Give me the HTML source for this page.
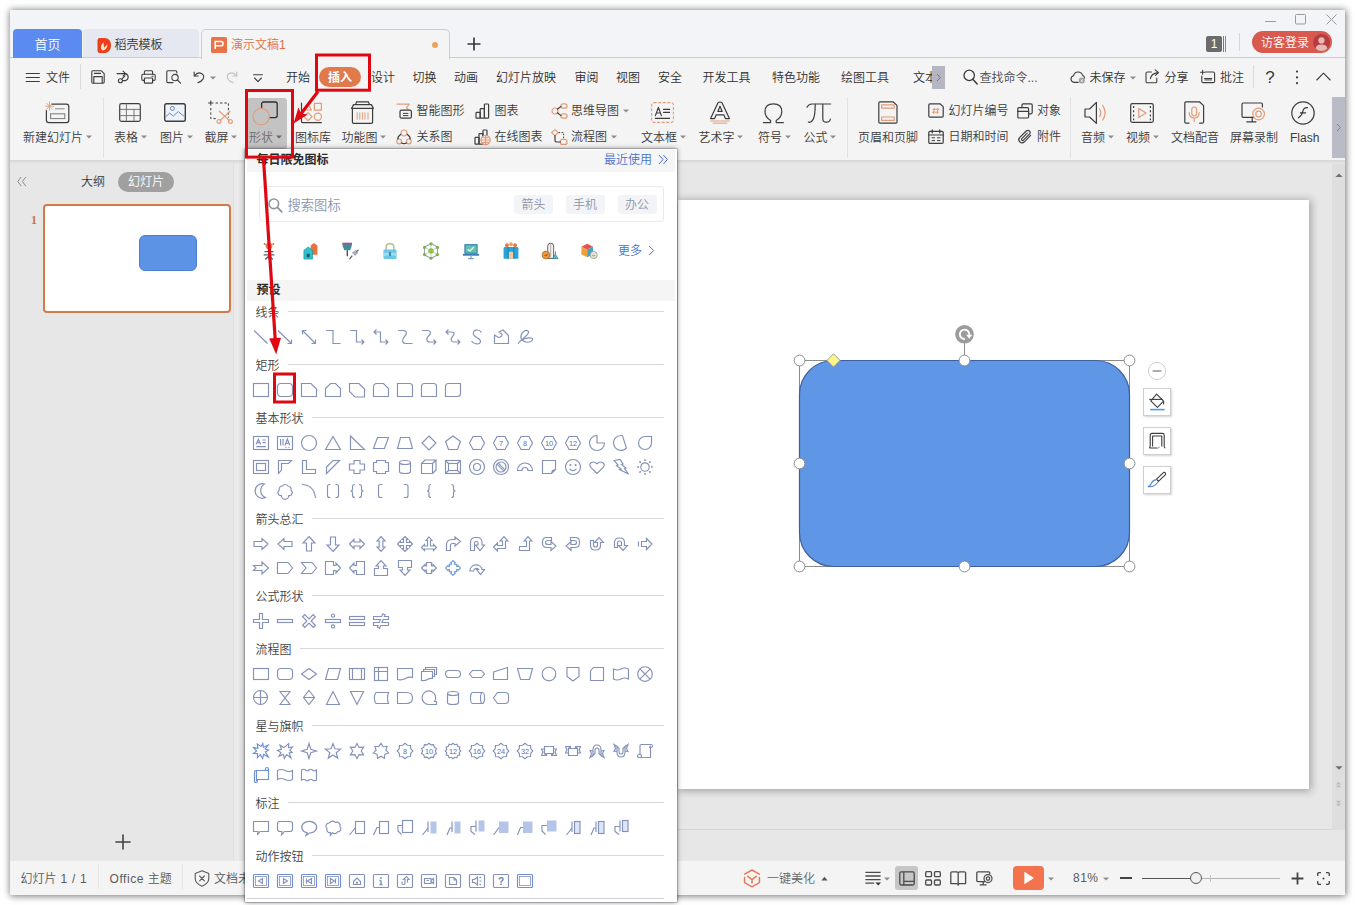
<!DOCTYPE html>
<html lang="zh-CN"><head><meta charset="utf-8"><title>演示文稿1 - WPS 演示</title>
<style>
html,body{margin:0;padding:0;}
body{width:1355px;height:905px;position:relative;overflow:hidden;background:#fff;font-family:"Liberation Sans","Noto Sans CJK SC",sans-serif;font-size:12px;color:#3b3b3b;font-weight:350;}
.a{position:absolute;display:block;}
.t{position:absolute;white-space:nowrap;display:block;}
svg{overflow:visible;}
</style></head>
<body>
<div class="a" style="left:10px;top:10px;width:1335px;height:885px;background:#e7e7e7;box-shadow:0.5px 0.5px 7px 0.5px rgba(0,0,0,.55);"></div>
<div class="a" style="left:10px;top:10px;width:1335px;height:48px;background:#f3f4f8;"></div>
<div class="a" style="left:10px;top:57px;width:1335px;height:1px;background:#c9cdd6;"></div>
<div class="a" style="left:10px;top:58px;width:1335px;height:102px;background:#f4f4f4;"></div>
<div class="a" style="left:10px;top:160px;width:1335px;height:4px;background:linear-gradient(#d6d6d6,#e7e7e7);"></div>
<div class="a" style="left:13px;top:29px;width:69px;height:29px;background:#5b8bf0;border-radius:4px 4px 0 0;"></div>
<span class="t" style="left:13px;top:34.5px;font-size:13px;line-height:19px;color:#fff;width:69px;text-align:center;">首页</span>
<div class="a" style="left:83px;top:29px;width:116px;height:28px;background:#e5e8f0;border-radius:4px 4px 0 0;"></div>
<svg class="a" style="left:96px;top:37px;" width="16" height="17" viewBox="0 0 16 17"><path d="M1.5 3.2Q1.5 1 3.8 1H8.2C12.6 1 15 4.2 15 8.4S12.3 16 8 16H3.8Q1.5 16 1.5 13.8Z" fill="#ea3f1a"/><path d="M6.6 13.6C4 11.6 4.6 8 7.6 5.2C7.2 7.4 8.2 8.4 8 10.4C9.4 9.6 10.4 8.4 11.2 7.2C11.8 10.2 10 12.8 6.6 13.6Z" fill="#ffe3c8"/></svg>
<span class="t" style="left:114.5px;top:36.0px;font-size:12px;line-height:18px;color:#333;">稻壳模板</span>
<div class="a" style="left:201px;top:29px;width:249px;height:30px;background:#f4f4f4;border:1px solid #c9cdd6;border-bottom:none;border-radius:5px 5px 0 0;box-sizing:border-box;"></div>
<svg class="a" style="left:211px;top:37px;" width="16" height="16" viewBox="0 0 16 16"><rect width="16" height="16" rx="1.5" fill="#ea7349"/><path d="M4.2 12V4.6H10.2Q12 4.6 12 6.4V7Q12 8.8 10.2 8.8H4.2" fill="none" stroke="#fff" stroke-width="1.5"/></svg>
<span class="t" style="left:231px;top:36.0px;font-size:12px;line-height:18px;color:#e0703f;">演示文稿1</span>
<div class="a" style="left:432px;top:42px;width:6px;height:6px;background:#e9a45c;border-radius:50%;"></div>
<svg class="a" style="left:467px;top:37px;" width="14" height="14" viewBox="0 0 14 14"><path d="M7 0.5V13.5M0.5 7H13.5" stroke="#3a3a3a" stroke-width="1.7" fill="none"/></svg>
<svg class="a" style="left:1264px;top:13px;" width="74" height="14" viewBox="0 0 74 14"><path d="M1 8.5H12" stroke="#9a9a9a" stroke-width="1"/><rect x="31.5" y="1.5" width="10" height="9.5" rx="1" fill="none" stroke="#9a9a9a" stroke-width="1"/><path d="M62.5 1.5L72.5 11.5M72.5 1.5L62.5 11.5" stroke="#9a9a9a" stroke-width="1"/></svg>
<div class="a" style="left:1206px;top:36px;width:16px;height:16px;background:#6b6b6b;border-radius:2px;"></div>
<span class="t" style="left:1206px;top:35.0px;font-size:12px;line-height:18px;color:#fff;width:16px;text-align:center;">1</span>
<div class="a" style="left:1223px;top:36px;width:1px;height:16px;background:#7a7a7a;"></div>
<div class="a" style="left:1225px;top:36px;width:1px;height:16px;background:#8a8a8a;"></div>
<div class="a" style="left:1239px;top:33px;width:1px;height:18px;background:#d4d6dc;"></div>
<div class="a" style="left:1252px;top:31px;width:80px;height:22px;background:#d9594f;border-radius:11px;"></div>
<span class="t" style="left:1261px;top:33.5px;font-size:12px;line-height:18px;color:#fff;">访客登录</span>
<svg class="a" style="left:1313px;top:33.5px;" width="17" height="17" viewBox="0 0 17 17"><circle cx="8.5" cy="8.5" r="8.5" fill="#b63c43"/><circle cx="8.5" cy="6.4" r="3.1" fill="#e6b9b4"/><path d="M2.6 14.4Q3.2 10.4 8.5 10.4T14.4 14.4Q11.8 17 8.5 17T2.6 14.4Z" fill="#e6b9b4"/></svg>
<svg class="a" style="left:25px;top:72px;" width="15" height="12" viewBox="0 0 15 12"><path d="M0.8 1.5H14.8M0.8 5.5H14.8M0.8 9.5H14.8" stroke="#3d3d3d" stroke-width="1.1"/></svg>
<span class="t" style="left:46px;top:69.3px;font-size:12px;line-height:18px;color:#333;">文件</span>
<div class="a" style="left:80px;top:64px;width:1px;height:25px;background:#d9d9d9;"></div>
<svg class="a" style="left:91px;top:70px;" width="14" height="14" viewBox="0 0 14 14"><path d="M1.6 0.8H10.4L13.2 3.6V12Q13.2 13.2 12 13.2H1.8Q0.8 13.2 0.8 12V1.8Q0.8 0.8 1.6 0.8Z" fill="none" stroke="#3d3d3d" stroke-width="1.1" stroke-linejoin="round" stroke-linecap="round"/><path d="M2.8 13V6.6H11.2V13M3.4 3.4H9.6" fill="none" stroke="#3d3d3d" stroke-width="1.1" stroke-linejoin="round" stroke-linecap="round"/></svg>
<svg class="a" style="left:116px;top:70px;" width="15" height="14" viewBox="0 0 15 14"><path d="M1 3.6H9.4A3.6 3.6 0 0 1 9.4 10.6H6.6" fill="none" stroke="#3d3d3d" stroke-width="1.1" stroke-linejoin="round" stroke-linecap="round"/><path d="M7 1.2L9.6 3.6L7 6" fill="none" stroke="#3d3d3d" stroke-width="1.1" stroke-linejoin="round" stroke-linecap="round"/><circle cx="4.4" cy="10.8" r="2" fill="none" stroke="#3d3d3d" stroke-width="1.1" stroke-linejoin="round" stroke-linecap="round"/><path d="M5.8 9.2L9 5.8" fill="none" stroke="#3d3d3d" stroke-width="1.1" stroke-linejoin="round" stroke-linecap="round"/></svg>
<svg class="a" style="left:141px;top:70px;" width="15" height="14" viewBox="0 0 15 14"><path d="M3.4 4.2V1.8Q3.4 0.8 4.4 0.8H10.6Q11.6 0.8 11.6 1.8V4.2" fill="none" stroke="#3d3d3d" stroke-width="1.1" stroke-linejoin="round" stroke-linecap="round"/><rect x="0.8" y="4.2" width="13.4" height="6.2" rx="1.2" fill="none" stroke="#3d3d3d" stroke-width="1.1" stroke-linejoin="round" stroke-linecap="round"/><rect x="3.4" y="8" width="8.2" height="5.2" rx="0.8" fill="#f4f4f4" stroke="#3d3d3d" stroke-width="1.2"/><path d="M11 6.2H12" fill="none" stroke="#3d3d3d" stroke-width="1.1" stroke-linejoin="round" stroke-linecap="round"/></svg>
<svg class="a" style="left:166px;top:70px;" width="16" height="14" viewBox="0 0 16 14"><path d="M7 12.6H1.8Q0.8 12.6 0.8 11.6V1.8Q0.8 0.8 1.8 0.8H9.8Q10.8 0.8 10.8 1.8V3" fill="none" stroke="#3d3d3d" stroke-width="1.1" stroke-linejoin="round" stroke-linecap="round"/><circle cx="9" cy="7.6" r="3.2" fill="none" stroke="#3d3d3d" stroke-width="1.1" stroke-linejoin="round" stroke-linecap="round"/><path d="M11.4 10L14.6 13.2" fill="none" stroke="#3d3d3d" stroke-width="1.1" stroke-linejoin="round" stroke-linecap="round"/></svg>
<svg class="a" style="left:193px;top:70px;" width="12" height="14" viewBox="0 0 12 14"><path d="M1.2 2V6H5.2" fill="none" stroke="#3d3d3d" stroke-width="1.1" stroke-linejoin="round" stroke-linecap="round"/><path d="M1.6 5.8Q4.6 1.6 8.4 3.4T9.8 9.4Q8.2 11.8 5 12.6" fill="none" stroke="#3d3d3d" stroke-width="1.1" stroke-linejoin="round" stroke-linecap="round"/></svg>
<svg class="a" style="left:209.5px;top:76px;" width="6" height="4" viewBox="0 0 6 4"><path d="M0 0.4h6L3 3.6z" fill="#8c8c8c"/></svg>
<svg class="a" style="left:226px;top:70px;" width="12" height="14" viewBox="0 0 12 14"><path d="M10.8 2V6H6.8" fill="none" stroke="#c4c4c4" stroke-width="1.2" stroke-linejoin="round" stroke-linecap="round"/><path d="M10.4 5.8Q7.4 1.6 3.6 3.4T2.2 9.4Q3.8 11.8 7 12.6" fill="none" stroke="#c4c4c4" stroke-width="1.2" stroke-linejoin="round" stroke-linecap="round"/></svg>
<svg class="a" style="left:253px;top:74px;" width="10" height="9" viewBox="0 0 10 9"><path d="M0.6 0.8H9.4" fill="none" stroke="#3d3d3d" stroke-width="1.1" stroke-linejoin="round" stroke-linecap="round"/><path d="M1.6 4L5 7.6L8.4 4" fill="none" stroke="#3d3d3d" stroke-width="1.1" stroke-linejoin="round" stroke-linecap="round"/></svg>
<span class="t" style="left:286px;top:69.3px;font-size:12px;line-height:18px;color:#2f2f2f;">开始</span>
<span class="t" style="left:371px;top:69.3px;font-size:12px;line-height:18px;color:#2f2f2f;">设计</span>
<span class="t" style="left:412.5px;top:69.3px;font-size:12px;line-height:18px;color:#2f2f2f;">切换</span>
<span class="t" style="left:454px;top:69.3px;font-size:12px;line-height:18px;color:#2f2f2f;">动画</span>
<span class="t" style="left:496px;top:69.3px;font-size:12px;line-height:18px;color:#2f2f2f;">幻灯片放映</span>
<span class="t" style="left:574.5px;top:69.3px;font-size:12px;line-height:18px;color:#2f2f2f;">审阅</span>
<span class="t" style="left:616px;top:69.3px;font-size:12px;line-height:18px;color:#2f2f2f;">视图</span>
<span class="t" style="left:658px;top:69.3px;font-size:12px;line-height:18px;color:#2f2f2f;">安全</span>
<span class="t" style="left:702.5px;top:69.3px;font-size:12px;line-height:18px;color:#2f2f2f;">开发工具</span>
<span class="t" style="left:772px;top:69.3px;font-size:12px;line-height:18px;color:#2f2f2f;">特色功能</span>
<span class="t" style="left:841px;top:69.3px;font-size:12px;line-height:18px;color:#2f2f2f;">绘图工具</span>
<div class="a" style="left:319px;top:67px;width:42px;height:20px;background:#e07a4b;border-radius:10px;"></div>
<span class="t" style="left:319px;top:69.3px;font-size:12px;line-height:18px;color:#fff;font-weight:700;width:42px;text-align:center;">插入</span>
<span class="t" style="left:913px;top:69.3px;font-size:12px;line-height:18px;color:#2f2f2f;width:20px;overflow:hidden;">文本</span>
<div class="a" style="left:932px;top:66px;width:13px;height:23px;background:#b4b7c1;"></div>
<svg class="a" style="left:935px;top:73px;" width="7" height="9" viewBox="0 0 7 9"><path d="M2 1L5.4 4.5L2 8" fill="none" stroke="#6c7080" stroke-width="1"/></svg>
<svg class="a" style="left:963px;top:69px;" width="15" height="16" viewBox="0 0 15 16"><circle cx="6.2" cy="6.4" r="5.2" fill="none" stroke="#3d3d3d" stroke-width="1.3"/><path d="M10 10.4L14.2 15" stroke="#3d3d3d" stroke-width="1.5" stroke-linecap="round"/></svg>
<span class="t" style="left:979.5px;top:69.3px;font-size:12px;line-height:18px;color:#4a4a4a;">查找命令...</span>
<svg class="a" style="left:1070px;top:70px;" width="16" height="14" viewBox="0 0 16 14"><path d="M8.2 12.4H4.2A3.4 3.4 0 0 1 3.6 5.7A4.6 4.6 0 0 1 12.5 5.2A3.3 3.3 0 0 1 14.6 8" fill="none" stroke="#3d3d3d" stroke-width="1.1" stroke-linejoin="round" stroke-linecap="round"/><circle cx="11.8" cy="10.6" r="3" fill="#9c9c9c"/><path d="M10.7 9.5L12.9 11.7M12.9 9.5L10.7 11.7" stroke="#fff" stroke-width="0.9"/></svg>
<span class="t" style="left:1089.5px;top:69.3px;font-size:12px;line-height:18px;color:#333;">未保存</span>
<svg class="a" style="left:1130px;top:76px;" width="6" height="4" viewBox="0 0 6 4"><path d="M0 0.4h6L3 3.6z" fill="#8c8c8c"/></svg>
<svg class="a" style="left:1145px;top:69px;" width="15" height="15" viewBox="0 0 15 15"><path d="M6.4 3H2.4Q1 3 1 4.4V12.4Q1 13.8 2.4 13.8H10.4Q11.8 13.8 11.8 12.4V9" fill="none" stroke="#3d3d3d" stroke-width="1.1" stroke-linejoin="round" stroke-linecap="round"/><path d="M5.4 9.6Q6.2 4.4 13 3.6" fill="none" stroke="#3d3d3d" stroke-width="1.1" stroke-linejoin="round" stroke-linecap="round"/><path d="M10.2 0.9L13.4 3.5L10.6 6.4" fill="none" stroke="#3d3d3d" stroke-width="1.1" stroke-linejoin="round" stroke-linecap="round"/></svg>
<span class="t" style="left:1164.5px;top:69.3px;font-size:12px;line-height:18px;color:#333;">分享</span>
<svg class="a" style="left:1200px;top:69px;" width="16" height="15" viewBox="0 0 16 15"><path d="M5.4 3H13.2Q14.6 3 14.6 4.4V12.2Q14.6 13.6 13.2 13.6H3.2Q1.8 13.6 1.8 12.2V7" fill="none" stroke="#3d3d3d" stroke-width="1.1" stroke-linejoin="round" stroke-linecap="round"/><path d="M0.6 3.2H4.6M2.6 1.2V5.2" fill="none" stroke="#3d3d3d" stroke-width="1.1" stroke-linejoin="round" stroke-linecap="round"/><path d="M4.6 9.6H11.8" fill="none" stroke="#3d3d3d" stroke-width="1.1" stroke-linejoin="round" stroke-linecap="round"/><path d="M4.6 11H11.8" stroke="#3d3d3d" stroke-width="0.8"/></svg>
<span class="t" style="left:1220px;top:69.3px;font-size:12px;line-height:18px;color:#333;">批注</span>
<div class="a" style="left:1253px;top:65px;width:1px;height:23px;background:#d9d9d9;"></div>
<span class="t" style="left:1261px;top:67.8px;font-size:17px;line-height:20px;color:#3a3a3a;width:18px;text-align:center;">?</span>
<svg class="a" style="left:1295px;top:70px;" width="4" height="15" viewBox="0 0 4 15"><circle cx="2" cy="1.6" r="1.1" fill="#3d3d3d"/><circle cx="2" cy="7.4" r="1.1" fill="#3d3d3d"/><circle cx="2" cy="13.2" r="1.1" fill="#3d3d3d"/></svg>
<svg class="a" style="left:1316px;top:72px;" width="15" height="9" viewBox="0 0 15 9"><path d="M0.8 8L7.5 1.2L14.2 8" fill="none" stroke="#3d3d3d" stroke-width="1.1" stroke-linejoin="round" stroke-linecap="round"/></svg>
<div class="a" style="left:103px;top:97px;width:1px;height:61px;background:#e2e2e2;"></div>
<div class="a" style="left:847px;top:97px;width:1px;height:61px;background:#e2e2e2;"></div>
<div class="a" style="left:1070px;top:97px;width:1px;height:61px;background:#e2e2e2;"></div>
<svg class="a" style="left:45px;top:101px;" width="25" height="23" viewBox="0 0 25 23"><path d="M6.6 3.2H21.4Q23.8 3.2 23.8 5.6V19.2Q23.8 21.6 21.4 21.6H3.8Q1.4 21.6 1.4 19.2V9.6" fill="none" stroke="#3d3d3d" stroke-width="1.2" stroke-linejoin="round" stroke-linecap="round" stroke-width="1.4"/><path d="M10 7.8H19.6" stroke="#8a8a8a" stroke-width="1"/><rect x="5.6" y="12.8" width="14.2" height="4.8" fill="none" stroke="#7a7a7a" stroke-width="1"/><path d="M4.5 0.6V9.8M-0.1 5.2H9.1M1.3 2L7.7 8.4M7.7 2L1.3 8.4" stroke="#e29c78" stroke-width="0.9" fill="none"/></svg>
<span class="t" style="left:23px;top:128.9px;font-size:12px;line-height:18px;color:#3b3b3b;">新建幻灯片</span>
<svg class="a" style="left:85.8px;top:134.5px;" width="6" height="4" viewBox="0 0 6 4"><path d="M0 0.4h6L3 3.6z" fill="#8c8c8c"/></svg>
<svg class="a" style="left:119px;top:103px;" width="22" height="19" viewBox="0 0 22 19"><rect x="0.7" y="0.7" width="20.6" height="17.6" rx="1.8" fill="none" stroke="#3d3d3d" stroke-width="1.2" stroke-linejoin="round" stroke-linecap="round" stroke-width="1.4"/><path d="M0.6 6.4H21.4M0.6 12.6H21.4M7.4 0.6V18.4M15 6.4V18.4" stroke="#6a6a6a" stroke-width="0.9" fill="none"/></svg>
<span class="t" style="left:114px;top:128.9px;font-size:12px;line-height:18px;color:#3b3b3b;">表格</span>
<svg class="a" style="left:140.8px;top:134.5px;" width="6" height="4" viewBox="0 0 6 4"><path d="M0 0.4h6L3 3.6z" fill="#8c8c8c"/></svg>
<svg class="a" style="left:164px;top:103px;" width="22" height="19" viewBox="0 0 22 19"><rect x="0.7" y="0.7" width="20.6" height="17.6" rx="1.8" fill="#eef3fb" stroke="#3d3d3d" stroke-width="1.4"/><circle cx="8.4" cy="5.4" r="2" fill="none" stroke="#6a86b8" stroke-width="1"/><path d="M1.4 14L5.6 10.2L9.4 13L14.2 8.6L20.4 13.6" fill="none" stroke="#6a86b8" stroke-width="1" stroke-linejoin="round"/></svg>
<span class="t" style="left:160px;top:128.9px;font-size:12px;line-height:18px;color:#3b3b3b;">图片</span>
<svg class="a" style="left:186.8px;top:134.5px;" width="6" height="4" viewBox="0 0 6 4"><path d="M0 0.4h6L3 3.6z" fill="#8c8c8c"/></svg>
<svg class="a" style="left:208px;top:100px;" width="25" height="24" viewBox="0 0 25 24"><path d="M2.8 0.4V5.6M0.2 3H5.4" stroke="#3d3d3d" stroke-width="1.1"/><path d="M7.6 3H20.4V17.6M2.8 8V18.6H8.6" fill="none" stroke="#3d3d3d" stroke-width="1" stroke-dasharray="2.4 2"/><path d="M11.4 11.2L21.4 20.6M22 11.2L12 20.6" fill="none" stroke="#e29c78" stroke-width="1.2" stroke-linejoin="round" stroke-linecap="round"/><circle cx="11" cy="21.4" r="1.9" fill="none" stroke="#e29c78" stroke-width="1.2" stroke-linejoin="round" stroke-linecap="round"/><circle cx="22.4" cy="21.4" r="1.9" fill="none" stroke="#e29c78" stroke-width="1.2" stroke-linejoin="round" stroke-linecap="round"/></svg>
<span class="t" style="left:204.5px;top:128.9px;font-size:12px;line-height:18px;color:#3b3b3b;">截屏</span>
<svg class="a" style="left:231.3px;top:134.5px;" width="6" height="4" viewBox="0 0 6 4"><path d="M0 0.4h6L3 3.6z" fill="#8c8c8c"/></svg>
<div class="a" style="left:247px;top:98px;width:40px;height:51px;background:#c3c3c3;border-radius:3px;"></div>
<svg class="a" style="left:252px;top:101px;" width="27" height="25" viewBox="0 0 27 25"><rect x="9.6" y="1" width="15.6" height="15.6" rx="2" fill="none" stroke="#2f2f2f" stroke-width="1.3"/><circle cx="9.2" cy="15.6" r="8.2" fill="#c3c3c3" stroke="#e29c78" stroke-width="1.2"/></svg>
<span class="t" style="left:249px;top:128.9px;font-size:12px;line-height:18px;color:#6e6e6e;">形状</span>
<svg class="a" style="left:275.8px;top:134.5px;" width="6" height="4" viewBox="0 0 6 4"><path d="M0 0.4h6L3 3.6z" fill="#666"/></svg>
<svg class="a" style="left:300px;top:101px;" width="24" height="23" viewBox="0 0 24 23"><path d="M1.5 2V20.4Q1.5 21.7 2.8 21.7H21.4" fill="none" stroke="#3d3d3d" stroke-width="1.2" stroke-linejoin="round" stroke-linecap="round" stroke-width="1.3"/><path d="M4.6 9L8 3.2L11.4 9Z" fill="none" stroke="#e29c78" stroke-width="1.2" stroke-linejoin="round" stroke-linecap="round"/><rect x="14.4" y="2.4" width="7" height="6.8" fill="none" stroke="#e29c78" stroke-width="1.2" stroke-linejoin="round" stroke-linecap="round"/><path d="M8 11.6L12 15.6L8 19.6L4 15.6Z" fill="none" stroke="#e29c78" stroke-width="1.2" stroke-linejoin="round" stroke-linecap="round"/><circle cx="17.9" cy="15.7" r="3.6" fill="none" stroke="#e29c78" stroke-width="1.2" stroke-linejoin="round" stroke-linecap="round"/></svg>
<span class="t" style="left:295px;top:128.9px;font-size:12px;line-height:18px;color:#3b3b3b;">图标库</span>
<svg class="a" style="left:351px;top:101px;" width="23" height="23" viewBox="0 0 23 23"><path d="M1.4 7.4H21.6V21Q21.6 22.4 20.2 22.4H2.8Q1.4 22.4 1.4 21Z" fill="none" stroke="#3d3d3d" stroke-width="1.2" stroke-linejoin="round" stroke-linecap="round"/><path d="M0.6 7.4L2.6 3.6H20.4L22.4 7.4" fill="none" stroke="#3d3d3d" stroke-width="1.2" stroke-linejoin="round" stroke-linecap="round"/><path d="M4.6 3.4L5.6 0.8H17.4L18.4 3.4" fill="none" stroke="#3d3d3d" stroke-width="1.2" stroke-linejoin="round" stroke-linecap="round"/><path d="M6.2 11.4V18.6M8.8 11.4V18.6M11.4 11.4V18.6M14 11.4V18.6M17 11.4V18.6" stroke="#e29c78" stroke-width="1"/></svg>
<span class="t" style="left:341.5px;top:128.9px;font-size:12px;line-height:18px;color:#3b3b3b;">功能图</span>
<svg class="a" style="left:380.3px;top:134.5px;" width="6" height="4" viewBox="0 0 6 4"><path d="M0 0.4h6L3 3.6z" fill="#8c8c8c"/></svg>
<svg class="a" style="left:396px;top:102.5px;" width="17" height="16" viewBox="0 0 17 16"><path d="M1 1.2H13.2L10.6 4.6L13.2 8H6.2" fill="none" stroke="#e29c78" stroke-width="1.2" stroke-linejoin="round" stroke-linecap="round"/><rect x="4" y="7.2" width="11.4" height="8" rx="1.5" fill="#f4f4f4" stroke="#3d3d3d" stroke-width="1.2"/><path d="M7 10.4H12.4M7 12.6H12.4" stroke="#3d3d3d" stroke-width="1"/></svg>
<span class="t" style="left:416.5px;top:101.5px;font-size:12px;line-height:18px;color:#3b3b3b;">智能图形</span>
<svg class="a" style="left:396px;top:128.5px;" width="17" height="16" viewBox="0 0 17 16"><circle cx="8" cy="4" r="3" fill="none" stroke="#e29c78" stroke-width="1.2" stroke-linejoin="round" stroke-linecap="round"/><circle cx="3.2" cy="12.4" r="2.4" fill="none" stroke="#e29c78" stroke-width="1.2" stroke-linejoin="round" stroke-linecap="round"/><circle cx="12.8" cy="12.4" r="2.4" fill="none" stroke="#e29c78" stroke-width="1.2" stroke-linejoin="round" stroke-linecap="round"/><path d="M4.6 5.4Q1.6 7.4 1.8 10M11.4 5.4Q14.4 7.4 14.2 10M5.6 14Q8 15.4 10.4 14" fill="none" stroke="#3d3d3d" stroke-width="1.2" stroke-linejoin="round" stroke-linecap="round"/></svg>
<span class="t" style="left:416.5px;top:127.5px;font-size:12px;line-height:18px;color:#3b3b3b;">关系图</span>
<svg class="a" style="left:475px;top:102.5px;" width="17" height="16" viewBox="0 0 17 16"><rect x="1" y="9.4" width="4.2" height="5.8" rx="0.8" fill="none" stroke="#3d3d3d" stroke-width="1.2" stroke-linejoin="round" stroke-linecap="round"/><rect x="5.2" y="5.6" width="4.2" height="9.6" rx="0.8" fill="none" stroke="#3d3d3d" stroke-width="1.2" stroke-linejoin="round" stroke-linecap="round"/><rect x="9.4" y="1" width="4.2" height="14.2" rx="0.8" fill="none" stroke="#3d3d3d" stroke-width="1.2" stroke-linejoin="round" stroke-linecap="round"/></svg>
<span class="t" style="left:494.5px;top:101.5px;font-size:12px;line-height:18px;color:#3b3b3b;">图表</span>
<svg class="a" style="left:474px;top:128.5px;" width="17" height="16" viewBox="0 0 17 16"><rect x="1" y="8.4" width="4" height="6.8" rx="0.8" fill="none" stroke="#3d3d3d" stroke-width="1.2" stroke-linejoin="round" stroke-linecap="round"/><rect x="5" y="4.6" width="4" height="10.6" rx="0.8" fill="none" stroke="#3d3d3d" stroke-width="1.2" stroke-linejoin="round" stroke-linecap="round"/><rect x="9" y="1" width="4" height="8" rx="0.8" fill="none" stroke="#3d3d3d" stroke-width="1.2" stroke-linejoin="round" stroke-linecap="round"/><circle cx="11.6" cy="11" r="4.6" fill="#f4f4f4" stroke="#e29c78" stroke-width="1.2"/><path d="M7 11H16.2M11.6 6.4V15.6M8.6 8.2Q11.6 9.6 14.6 8.2M8.6 13.8Q11.6 12.4 14.6 13.8" fill="none" stroke="#e29c78" stroke-width="1.2" stroke-linejoin="round" stroke-linecap="round" stroke-width="0.9"/></svg>
<span class="t" style="left:494.5px;top:127.5px;font-size:12px;line-height:18px;color:#3b3b3b;">在线图表</span>
<svg class="a" style="left:551px;top:102.5px;" width="17" height="16" viewBox="0 0 17 16"><circle cx="4" cy="8" r="3" fill="none" stroke="#e29c78" stroke-width="1.2" stroke-linejoin="round" stroke-linecap="round"/><rect x="10" y="0.8" width="6" height="4.4" rx="2" fill="none" stroke="#e29c78" stroke-width="1.2" stroke-linejoin="round" stroke-linecap="round"/><rect x="10" y="10.8" width="6" height="4.4" rx="2" fill="none" stroke="#e29c78" stroke-width="1.2" stroke-linejoin="round" stroke-linecap="round"/><path d="M6.4 6.2L10 3.4M6.4 9.8L10 12.6" fill="none" stroke="#3d3d3d" stroke-width="1.2" stroke-linejoin="round" stroke-linecap="round"/></svg>
<span class="t" style="left:571px;top:101.5px;font-size:12px;line-height:18px;color:#3b3b3b;">思维导图</span>
<svg class="a" style="left:622.5px;top:109.0px;" width="6" height="4" viewBox="0 0 6 4"><path d="M0 0.4h6L3 3.6z" fill="#8c8c8c"/></svg>
<svg class="a" style="left:551px;top:128.5px;" width="17" height="16" viewBox="0 0 17 16"><path d="M4 0.6L7.4 3.6L4 6.6L0.6 3.6Z" fill="none" stroke="#e29c78" stroke-width="1.2" stroke-linejoin="round" stroke-linecap="round"/><rect x="9.4" y="10.4" width="6.6" height="5" rx="2" fill="none" stroke="#e29c78" stroke-width="1.2" stroke-linejoin="round" stroke-linecap="round"/><path d="M4 6.6V11.6Q4 13 5.4 13H9.4" fill="none" stroke="#3d3d3d" stroke-width="1.2" stroke-linejoin="round" stroke-linecap="round"/><path d="M7.6 3.6H12.6V10.2" fill="none" stroke="#3d3d3d" stroke-width="1" stroke-dasharray="1.6 1.4"/></svg>
<span class="t" style="left:571px;top:127.5px;font-size:12px;line-height:18px;color:#3b3b3b;">流程图</span>
<svg class="a" style="left:610.5px;top:135.0px;" width="6" height="4" viewBox="0 0 6 4"><path d="M0 0.4h6L3 3.6z" fill="#8c8c8c"/></svg>
<svg class="a" style="left:651px;top:102px;" width="23" height="21" viewBox="0 0 23 21"><rect x="0.6" y="0.6" width="21.8" height="19.8" rx="2" fill="none" stroke="#e29c78" stroke-width="1.1" stroke-dasharray="3 1.6"/><path d="M4.4 13.6L7.4 5.4L10.4 13.6M5.4 11H9.4" fill="none" stroke="#3d3d3d" stroke-width="1.2" stroke-linejoin="round" stroke-linecap="round"/><path d="M12.6 7.4H18.6M12.6 10.4H18.6" fill="none" stroke="#3d3d3d" stroke-width="1.2" stroke-linejoin="round" stroke-linecap="round" stroke-width="1"/><path d="M4.4 16.4H18.6" fill="none" stroke="#3d3d3d" stroke-width="1.2" stroke-linejoin="round" stroke-linecap="round" stroke-width="1"/></svg>
<span class="t" style="left:641px;top:128.9px;font-size:12px;line-height:18px;color:#3b3b3b;">文本框</span>
<svg class="a" style="left:679.8px;top:134.5px;" width="6" height="4" viewBox="0 0 6 4"><path d="M0 0.4h6L3 3.6z" fill="#8c8c8c"/></svg>
<svg class="a" style="left:709px;top:101px;" width="22" height="23" viewBox="0 0 22 23"><path d="M1.6 17.6L9 1.8Q11 0.2 13 1.8L20.4 17.6H16.4L14.8 13.8H7.2L5.6 17.6Z" fill="none" stroke="#3d3d3d" stroke-width="1.2" stroke-linejoin="round" stroke-linecap="round"/><path d="M8.8 10.4L11 5.2L13.2 10.4Z" fill="none" stroke="#3d3d3d" stroke-width="1.2" stroke-linejoin="round" stroke-linecap="round"/><path d="M1.2 20H20.8" stroke="#e29c78" stroke-width="1"/><path d="M3.6 22.2H18.4" stroke="#e29c78" stroke-width="1"/></svg>
<span class="t" style="left:698.5px;top:128.9px;font-size:12px;line-height:18px;color:#3b3b3b;">艺术字</span>
<svg class="a" style="left:737.3px;top:134.5px;" width="6" height="4" viewBox="0 0 6 4"><path d="M0 0.4h6L3 3.6z" fill="#8c8c8c"/></svg>
<svg class="a" style="left:762px;top:102px;" width="23" height="22" viewBox="0 0 23 22"><path d="M1.4 20.6H8.6V18.6Q3 15.4 3 9.6Q3 1.8 11.4 1.8T19.8 9.6Q19.8 15.4 14.2 18.6V20.6H21.4" fill="none" stroke="#3d3d3d" stroke-width="1.2" stroke-linejoin="round" stroke-linecap="round" stroke-width="1.3"/></svg>
<span class="t" style="left:758px;top:128.9px;font-size:12px;line-height:18px;color:#3b3b3b;">符号</span>
<svg class="a" style="left:784.8px;top:134.5px;" width="6" height="4" viewBox="0 0 6 4"><path d="M0 0.4h6L3 3.6z" fill="#8c8c8c"/></svg>
<svg class="a" style="left:806px;top:102px;" width="26" height="22" viewBox="0 0 26 22"><path d="M1 5.2Q2.6 2 6 2H24.6" fill="none" stroke="#3d3d3d" stroke-width="1.2" stroke-linejoin="round" stroke-linecap="round" stroke-width="1.3"/><path d="M9.2 2.4Q9.2 14 7 17.6T2.4 20" fill="none" stroke="#3d3d3d" stroke-width="1.2" stroke-linejoin="round" stroke-linecap="round" stroke-width="1.3"/><path d="M16.8 2.4V16.4Q16.8 20.4 20.4 20.2T24.4 17" fill="none" stroke="#3d3d3d" stroke-width="1.2" stroke-linejoin="round" stroke-linecap="round" stroke-width="1.3"/></svg>
<span class="t" style="left:803.5px;top:128.9px;font-size:12px;line-height:18px;color:#3b3b3b;">公式</span>
<svg class="a" style="left:830.3px;top:134.5px;" width="6" height="4" viewBox="0 0 6 4"><path d="M0 0.4h6L3 3.6z" fill="#8c8c8c"/></svg>
<svg class="a" style="left:878px;top:101px;" width="20" height="23" viewBox="0 0 20 23"><path d="M2 0.8H15L19 4.4V21Q19 22.2 17.8 22.2H2Q0.8 22.2 0.8 21V2Q0.8 0.8 2 0.8Z" fill="none" stroke="#3d3d3d" stroke-width="1.2" stroke-linejoin="round" stroke-linecap="round"/><rect x="3.6" y="3.8" width="12.6" height="3.4" fill="none" stroke="#e29c78" stroke-width="1.2" stroke-linejoin="round" stroke-linecap="round" fill="#f3d2c0"/><rect x="3.6" y="16" width="12.6" height="3.4" fill="none" stroke="#e29c78" stroke-width="1.2" stroke-linejoin="round" stroke-linecap="round" fill="#f3d2c0"/></svg>
<span class="t" style="left:858px;top:128.9px;font-size:12px;line-height:18px;color:#3b3b3b;">页眉和页脚</span>
<svg class="a" style="left:928px;top:102.5px;" width="17" height="16" viewBox="0 0 17 16"><path d="M2 0.8H12L15.2 3.6V13Q15.2 14.2 14 14.2H2Q0.8 14.2 0.8 13V2Q0.8 0.8 2 0.8Z" fill="none" stroke="#3d3d3d" stroke-width="1.2" stroke-linejoin="round" stroke-linecap="round"/><path d="M6.4 4.6L5.6 11M10 4.6L9.2 11M4.4 6.4H11.4M4 9.2H11" stroke="#e29c78" stroke-width="1" fill="none"/></svg>
<span class="t" style="left:948.5px;top:101.5px;font-size:12px;line-height:18px;color:#3b3b3b;">幻灯片编号</span>
<svg class="a" style="left:928px;top:128.5px;" width="17" height="16" viewBox="0 0 17 16"><rect x="0.8" y="2.4" width="14.4" height="12" rx="1.2" fill="none" stroke="#3d3d3d" stroke-width="1.2" stroke-linejoin="round" stroke-linecap="round"/><path d="M4.2 0.8V4M11.8 0.8V4M0.8 6H15.2" fill="none" stroke="#3d3d3d" stroke-width="1.2" stroke-linejoin="round" stroke-linecap="round"/><path d="M3.6 8.8H7M9 8.8H12.4M3.6 11.6H7M9 11.6H12.4" stroke="#3d3d3d" stroke-width="1"/></svg>
<span class="t" style="left:948.5px;top:127.5px;font-size:12px;line-height:18px;color:#3b3b3b;">日期和时间</span>
<svg class="a" style="left:1017px;top:102.5px;" width="17" height="16" viewBox="0 0 17 16"><path d="M5 4.6V2Q5 0.8 6.2 0.8H14Q15.2 0.8 15.2 2V9.6Q15.2 10.8 14 10.8H11.6" fill="none" stroke="#3d3d3d" stroke-width="1.2" stroke-linejoin="round" stroke-linecap="round"/><rect x="0.8" y="4.6" width="10.8" height="10.4" rx="1.2" fill="none" stroke="#3d3d3d" stroke-width="1.2" stroke-linejoin="round" stroke-linecap="round"/><path d="M0.8 8.4H11.6" fill="none" stroke="#3d3d3d" stroke-width="1.2" stroke-linejoin="round" stroke-linecap="round"/></svg>
<span class="t" style="left:1037px;top:101.5px;font-size:12px;line-height:18px;color:#3b3b3b;">对象</span>
<svg class="a" style="left:1017px;top:128.5px;" width="17" height="16" viewBox="0 0 17 16"><path d="M13.6 6.4L7.4 12.8Q5 15 2.8 12.8T2.8 8.4L9.2 2Q10.8 0.6 12.4 2T12.4 5.2L6.4 11.2Q5.6 12 4.8 11.2T4.8 9.6L10.2 4.2" fill="none" stroke="#3d3d3d" stroke-width="1.2" stroke-linejoin="round" stroke-linecap="round" stroke-width="1.3"/></svg>
<span class="t" style="left:1037px;top:127.5px;font-size:12px;line-height:18px;color:#3b3b3b;">附件</span>
<svg class="a" style="left:1084px;top:101px;" width="26" height="24" viewBox="0 0 26 24"><path d="M1 8H5.6L12.4 1.4V22.4L5.6 16H1Z" fill="none" stroke="#3d3d3d" stroke-width="1.2" stroke-linejoin="round" stroke-linecap="round" stroke-width="1.3"/><path d="M15.6 8Q18 11.8 15.6 15.6" fill="none" stroke="#e29c78" stroke-width="1.2" stroke-linejoin="round" stroke-linecap="round"/><path d="M18.6 4.4Q23.6 11.8 18.6 19.2" fill="none" stroke="#e29c78" stroke-width="1.2" stroke-linejoin="round" stroke-linecap="round"/></svg>
<span class="t" style="left:1081px;top:128.9px;font-size:12px;line-height:18px;color:#3b3b3b;">音频</span>
<svg class="a" style="left:1107.8px;top:134.5px;" width="6" height="4" viewBox="0 0 6 4"><path d="M0 0.4h6L3 3.6z" fill="#8c8c8c"/></svg>
<svg class="a" style="left:1130px;top:103px;" width="24" height="20" viewBox="0 0 24 20"><rect x="0.7" y="0.7" width="22.6" height="18.6" rx="1.5" fill="none" stroke="#3d3d3d" stroke-width="1.2" stroke-linejoin="round" stroke-linecap="round"/><path d="M3.6 3V5M3.6 7.2V9.2M3.6 11.4V13.4M3.6 15.4V17.2M20.4 3V5M20.4 7.2V9.2M20.4 11.4V13.4M20.4 15.4V17.2" stroke="#3d3d3d" stroke-width="1.2"/><path d="M8.8 5.4L16 10L8.8 14.6Z" fill="none" stroke="#e29c78" stroke-width="1.2" stroke-linejoin="round" stroke-linecap="round"/></svg>
<span class="t" style="left:1126px;top:128.9px;font-size:12px;line-height:18px;color:#3b3b3b;">视频</span>
<svg class="a" style="left:1152.8px;top:134.5px;" width="6" height="4" viewBox="0 0 6 4"><path d="M0 0.4h6L3 3.6z" fill="#8c8c8c"/></svg>
<svg class="a" style="left:1184px;top:101px;" width="21" height="23" viewBox="0 0 21 23"><path d="M5 22.2H2Q0.8 22.2 0.8 21V2Q0.8 0.8 2 0.8H15.4L19.6 4.6V21Q19.6 22.2 18.4 22.2H15.6" fill="none" stroke="#3d3d3d" stroke-width="1.2" stroke-linejoin="round" stroke-linecap="round"/><rect x="7.8" y="6" width="4.8" height="9" rx="2.4" fill="none" stroke="#e29c78" stroke-width="1.2" stroke-linejoin="round" stroke-linecap="round"/><path d="M5.2 11.6Q5.2 17 10.2 17T15.2 11.6M10.2 17V20.4" fill="none" stroke="#e29c78" stroke-width="1.2" stroke-linejoin="round" stroke-linecap="round"/></svg>
<span class="t" style="left:1171px;top:128.9px;font-size:12px;line-height:18px;color:#3b3b3b;">文档配音</span>
<svg class="a" style="left:1241px;top:102px;" width="25" height="22" viewBox="0 0 25 22"><path d="M14 15.4H2.2Q1 15.4 1 14.2V2.2Q1 1 2.2 1H20.2Q21.4 1 21.4 2.2V5" fill="none" stroke="#3d3d3d" stroke-width="1.2" stroke-linejoin="round" stroke-linecap="round"/><path d="M11.2 15.4V19.6M5.8 19.8H15" fill="none" stroke="#3d3d3d" stroke-width="1.2" stroke-linejoin="round" stroke-linecap="round"/><circle cx="17.6" cy="12" r="5.8" fill="#f4f4f4" stroke="#e29c78" stroke-width="1.2"/><circle cx="17.6" cy="12" r="2.8" fill="none" stroke="#e29c78" stroke-width="1.2" stroke-linejoin="round" stroke-linecap="round"/></svg>
<span class="t" style="left:1230px;top:128.9px;font-size:12px;line-height:18px;color:#3b3b3b;">屏幕录制</span>
<svg class="a" style="left:1291px;top:101px;" width="24" height="24" viewBox="0 0 24 24"><circle cx="12" cy="12" r="11.2" fill="none" stroke="#3d3d3d" stroke-width="1.2" stroke-linejoin="round" stroke-linecap="round"/><path d="M16.4 6.6Q12.6 6.4 11.8 10.4T7.4 16.8M9.4 11.8H14.6" fill="none" stroke="#3d3d3d" stroke-width="1.2" stroke-linejoin="round" stroke-linecap="round"/></svg>
<span class="t" style="left:1290px;top:128.9px;font-size:12px;line-height:18px;color:#3b3b3b;width:28px;text-align:center;">Flash</span>
<div class="a" style="left:1332px;top:97px;width:13px;height:61px;background:#b9bbc6;"></div>
<svg class="a" style="left:1335px;top:123px;" width="7" height="9" viewBox="0 0 7 9"><path d="M2 1L5.4 4.5L2 8" fill="none" stroke="#80848f" stroke-width="1"/></svg>
<div class="a" style="left:233px;top:164px;width:1px;height:697px;background:#dfdfdf;"></div>
<div class="a" style="left:234px;top:164px;width:5px;height:697px;background:#ebebeb;"></div>
<svg class="a" style="left:17px;top:176px;" width="10" height="11" viewBox="0 0 10 11"><path d="M4.2 1L0.8 5.5L4.2 10M8.8 1L5.4 5.5L8.8 10" fill="none" stroke="#8a8a8a" stroke-width="1"/></svg>
<span class="t" style="left:81px;top:172.5px;font-size:12px;line-height:18px;color:#3b3b3b;">大纲</span>
<div class="a" style="left:118px;top:172px;width:56px;height:20px;background:#a0a0a0;border-radius:10px;"></div>
<span class="t" style="left:118px;top:172.5px;font-size:12px;line-height:18px;color:#fff;width:56px;text-align:center;">幻灯片</span>
<span class="t" style="left:28px;top:211.0px;font-size:12px;line-height:18px;color:#d0743f;font-weight:700;width:12px;text-align:center;font-family:'Liberation Serif',serif;">1</span>
<div class="a" style="left:43px;top:204px;width:188px;height:109px;background:#fff;border:2px solid #d17a4a;border-radius:4px;box-sizing:border-box;box-shadow:0 0 0 1px rgba(255,255,255,.6) inset;"></div>
<div class="a" style="left:139px;top:235px;width:58px;height:36px;background:#5d93e4;border:1px solid #4d7fd0;border-radius:6px;box-sizing:border-box;"></div>
<svg class="a" style="left:115px;top:834px;" width="16" height="16" viewBox="0 0 16 16"><path d="M8 0.4V15.6M0.4 8H15.6" stroke="#444" stroke-width="1.6" fill="none"/></svg>
<div class="a" style="left:678px;top:200px;width:631px;height:589px;background:#fff;box-shadow:0.5px 1px 8px 1px rgba(0,0,0,.30);"></div>
<div class="a" style="left:678px;top:829px;width:654px;height:1px;background:#d6d6d6;"></div>
<div class="a" style="left:1332px;top:164px;width:13px;height:666px;background:#dedede;"></div>
<svg class="a" style="left:1334.5px;top:172.5px;" width="8" height="4" viewBox="0 0 8 4"><path d="M0.4 4L4 0.4L7.6 4Z" fill="#707070"/></svg>
<svg class="a" style="left:1334.5px;top:766px;" width="8" height="4" viewBox="0 0 8 4"><path d="M0.4 0.2L4 3.8L7.6 0.2Z" fill="#707070"/></svg>
<svg class="a" style="left:1335px;top:781px;" width="7" height="9" viewBox="0 0 7 9"><path d="M0.8 3.4L3.5 0.8L6.2 3.4ZM0.8 6.2L3.5 3.8L6.2 6.2Z" fill="#bcbcbc"/></svg>
<svg class="a" style="left:1335px;top:799px;" width="7" height="9" viewBox="0 0 7 9"><path d="M0.8 1.8L3.5 4.4L6.2 1.8ZM0.8 4.8L3.5 7.4L6.2 4.8Z" fill="#bcbcbc"/></svg>
<svg class="a" style="left:0;top:0" width="1355" height="905" viewBox="0 0 1355 905"><rect x="799.5" y="360.5" width="330.0" height="206.0" fill="none" stroke="#8c8c8c" stroke-width="1"/><rect x="799.5" y="360.5" width="330.0" height="206.0" rx="34" fill="#5f96e6" stroke="#3d5f9e" stroke-width="1.2"/><path d="M964.5 360.5V340" stroke="#8c8c8c" stroke-width="1"/><circle cx="799.5" cy="360.5" r="5.4" fill="#fff" stroke="#8a8a8a" stroke-width="1"/><circle cx="964.5" cy="360.5" r="5.4" fill="#fff" stroke="#8a8a8a" stroke-width="1"/><circle cx="1129.5" cy="360.5" r="5.4" fill="#fff" stroke="#8a8a8a" stroke-width="1"/><circle cx="799.5" cy="463.5" r="5.4" fill="#fff" stroke="#8a8a8a" stroke-width="1"/><circle cx="1129.5" cy="463.5" r="5.4" fill="#fff" stroke="#8a8a8a" stroke-width="1"/><circle cx="799.5" cy="566.5" r="5.4" fill="#fff" stroke="#8a8a8a" stroke-width="1"/><circle cx="964.5" cy="566.5" r="5.4" fill="#fff" stroke="#8a8a8a" stroke-width="1"/><circle cx="1129.5" cy="566.5" r="5.4" fill="#fff" stroke="#8a8a8a" stroke-width="1"/><path d="M833.5 353.8L840 360.4L833.5 367L827 360.4Z" fill="#fdf58c" stroke="#9a9a9a" stroke-width="1"/><circle cx="964.5" cy="334.3" r="9.3" fill="#9c9c9c"/><path d="M964.9 339.0A4.7 4.7 0 1 1 969.2 334.90000000000003" fill="none" stroke="#fff" stroke-width="1.9"/><path d="M966.1 334.7H972.3L969.2 338.7Z" fill="#fff"/></svg>
<svg class="a" style="left:1147px;top:361px;" width="20" height="20" viewBox="0 0 20 20"><circle cx="10" cy="10" r="8.6" fill="#fff" stroke="#cfcfcf" stroke-width="1"/><path d="M5.6 10H14.4" stroke="#9a9a9a" stroke-width="1.6"/></svg>
<div class="a" style="left:1143px;top:388px;width:28px;height:28px;background:#fff;border:1px solid #cfcfcf;box-sizing:border-box;box-shadow:1px 1px 2px rgba(0,0,0,.18);"></div>
<div class="a" style="left:1143px;top:427px;width:28px;height:28px;background:#fff;border:1px solid #cfcfcf;box-sizing:border-box;box-shadow:1px 1px 2px rgba(0,0,0,.18);"></div>
<div class="a" style="left:1143px;top:466px;width:28px;height:28px;background:#fff;border:1px solid #cfcfcf;box-sizing:border-box;box-shadow:1px 1px 2px rgba(0,0,0,.18);"></div>
<svg class="a" style="left:1148px;top:393px;" width="18" height="18" viewBox="0 0 18 18"><path d="M8.6 1.2L15.6 8.2L9.4 14.4L2.8 7.8Z" fill="none" stroke="#3d3d3d" stroke-width="1.1" stroke-linejoin="round"/><path d="M1.2 6.4H14.6" fill="none" stroke="#3d3d3d" stroke-width="1.1" stroke-linejoin="round"/><path d="M15.6 8.2V11.4" fill="none" stroke="#3d3d3d" stroke-width="1.1" stroke-linejoin="round"/><path d="M2.2 16.6H16.6" stroke="#4a9fe0" stroke-width="1.6"/></svg>
<svg class="a" style="left:1148px;top:432px;" width="18" height="18" viewBox="0 0 18 18"><path d="M2.2 14.4V3.2Q2.2 1.4 4 1.4H14.4Q16.2 1.4 16.2 3.2V14.4" fill="none" stroke="#3d3d3d" stroke-width="1.1" stroke-linejoin="round"/><path d="M4.6 14.4V4H13.8V14.4" fill="none" stroke="#3d3d3d" stroke-width="1.1" stroke-linejoin="round" stroke-width="0.9"/><path d="M1.4 16.2L2.2 14.4M16.2 14.4L17 16.2M2 16H9.4" fill="none" stroke="#3d3d3d" stroke-width="1.1" stroke-linejoin="round" stroke-width="0.8"/><path d="M9.4 16.4L11.8 15" stroke="#e06a6a" stroke-width="0.9"/></svg>
<svg class="a" style="left:1147px;top:471px;" width="20" height="18" viewBox="0 0 20 18"><path d="M9.6 8.2L16.4 1.6Q17.8 0.8 18.4 2.2T18 4.2L11.4 10.4Z" fill="none" stroke="#3d3d3d" stroke-width="1.1" stroke-linejoin="round"/><path d="M9.2 8.6Q5.6 9.4 4.6 12T1.2 15.6Q7.6 16.4 11 11" fill="none" stroke="#5a86d8" stroke-width="1.1" stroke-linejoin="round"/></svg>
<div class="a" style="left:10px;top:861px;width:1335px;height:34px;background:#f4f4f4;"></div>
<span class="t" style="left:20.5px;top:869.5px;font-size:12px;line-height:18px;color:#5a5a5a;">幻灯片<span style="letter-spacing:0.7px"> 1 / 1</span></span>
<div class="a" style="left:98px;top:864px;width:1px;height:25px;background:#e6e6e6;"></div>
<span class="t" style="left:109.5px;top:869.5px;font-size:12px;line-height:18px;color:#5a5a5a;"><span style="letter-spacing:0.55px">Office </span>主题</span>
<div class="a" style="left:182px;top:864px;width:1px;height:25px;background:#e6e6e6;"></div>
<svg class="a" style="left:194px;top:870px;" width="16" height="17" viewBox="0 0 16 17"><path d="M8 0.8L14.8 3.6V8.6Q14.8 13.4 8 16.2Q1.2 13.4 1.2 8.6V3.6Z" fill="none" stroke="#5a5a5a" stroke-width="1.1" stroke-linejoin="round" stroke-linecap="round"/><path d="M5.6 6L10.4 10.8M10.4 6L5.6 10.8" fill="none" stroke="#5a5a5a" stroke-width="1.1" stroke-linejoin="round" stroke-linecap="round"/></svg>
<span class="t" style="left:214px;top:869.5px;font-size:12px;line-height:18px;color:#5a5a5a;">文档未保护</span>
<svg class="a" style="left:743px;top:869px;" width="18" height="19" viewBox="0 0 18 19"><path d="M9 1L16.4 5.2M9 1L1.6 5.2" fill="none" stroke="#e8795a" stroke-width="1.5" stroke-linejoin="round" stroke-linecap="round"/><path d="M1.6 8.4V13.6L9 17.8L16.4 13.6V8.4" fill="none" stroke="#e8795a" stroke-width="1.5" stroke-linejoin="round" stroke-linecap="round"/><path d="M4.6 7.2L9 10.6L13.4 7.2M9 10.6V14" fill="none" stroke="#e8795a" stroke-width="1.5" stroke-linejoin="round" stroke-linecap="round"/></svg>
<span class="t" style="left:767px;top:869.9px;font-size:12px;line-height:18px;color:#666;">一键美化</span>
<svg class="a" style="left:820.5px;top:876px;" width="7" height="5" viewBox="0 0 7 5"><path d="M0.4 4.4L3.5 0.8L6.6 4.4Z" fill="#555"/></svg>
<svg class="a" style="left:865px;top:871px;" width="17" height="15" viewBox="0 0 17 15"><path d="M0.4 1.4H15.6M0.4 5H15.6M0.4 8.6H15.6M0.4 12.2H9.2" fill="none" stroke="#4a4a4a" stroke-width="1.3" stroke-linejoin="round"/><path d="M10.4 11.4H16L13.2 14.4Z" fill="#333"/></svg>
<svg class="a" style="left:883.5px;top:876.5px;" width="6" height="4" viewBox="0 0 6 4"><path d="M0 0.4h6L3 3.6z" fill="#8c8c8c"/></svg>
<div class="a" style="left:895px;top:866px;width:23px;height:24px;background:#c6c6c6;border-radius:3px;"></div>
<svg class="a" style="left:899px;top:871px;" width="16" height="15" viewBox="0 0 16 15"><rect x="0.8" y="0.8" width="14.4" height="13.2" rx="1.5" fill="none" stroke="#4a4a4a" stroke-width="1.3" stroke-linejoin="round"/><path d="M4.8 0.8V14M4.8 10.4H15.2" fill="none" stroke="#4a4a4a" stroke-width="1.3" stroke-linejoin="round"/></svg>
<svg class="a" style="left:925px;top:871px;" width="16" height="15" viewBox="0 0 16 15"><rect x="0.7" y="0.7" width="5.8" height="5" rx="1" fill="none" stroke="#4a4a4a" stroke-width="1.3" stroke-linejoin="round"/><rect x="9.5" y="0.7" width="5.8" height="5" rx="1" fill="none" stroke="#4a4a4a" stroke-width="1.3" stroke-linejoin="round"/><rect x="0.7" y="9" width="5.8" height="5" rx="1" fill="none" stroke="#4a4a4a" stroke-width="1.3" stroke-linejoin="round"/><rect x="9.5" y="9" width="5.8" height="5" rx="1" fill="none" stroke="#4a4a4a" stroke-width="1.3" stroke-linejoin="round"/></svg>
<svg class="a" style="left:950px;top:871px;" width="17" height="15" viewBox="0 0 17 15"><path d="M8.2 2.2Q8.2 0.8 6.6 0.8H2Q0.8 0.8 0.8 2V12.6H6.8Q8.2 12.6 8.2 14.2Q8.2 12.6 9.6 12.6H15.6V2Q15.6 0.8 14.4 0.8H9.8Q8.2 0.8 8.2 2.2ZM8.2 2.2V14.2" fill="none" stroke="#4a4a4a" stroke-width="1.3" stroke-linejoin="round"/></svg>
<svg class="a" style="left:976px;top:871px;" width="17" height="15" viewBox="0 0 17 15"><path d="M9 10.6H2Q0.8 10.6 0.8 9.4V2Q0.8 0.8 2 0.8H12.6Q13.8 0.8 13.8 2V3" fill="none" stroke="#4a4a4a" stroke-width="1.3" stroke-linejoin="round"/><path d="M7.2 10.8V13.6M3.6 13.8H10.6" fill="none" stroke="#4a4a4a" stroke-width="1.3" stroke-linejoin="round"/><circle cx="12" cy="7.6" r="4" fill="#f4f4f4" stroke="#4a4a4a" stroke-width="1.2"/><circle cx="12" cy="7.6" r="1.7" fill="none" stroke="#4a4a4a" stroke-width="1.3" stroke-linejoin="round" stroke-width="1.1"/></svg>
<div class="a" style="left:1013px;top:866px;width:31px;height:24px;background:#f4734f;border-radius:4px;"></div>
<svg class="a" style="left:1023px;top:871px;" width="12" height="14" viewBox="0 0 12 14"><path d="M1.4 0.8L11 7L1.4 13.2Z" fill="#fff"/></svg>
<svg class="a" style="left:1048px;top:876.5px;" width="6" height="4" viewBox="0 0 6 4"><path d="M0 0.4h6L3 3.6z" fill="#8c8c8c"/></svg>
<span class="t" style="left:1073px;top:868.7px;font-size:12px;line-height:18px;color:#5a5a5a;"><span style="letter-spacing:0.5px">81%</span></span>
<svg class="a" style="left:1102.5px;top:876.5px;" width="6" height="4" viewBox="0 0 6 4"><path d="M0 0.4h6L3 3.6z" fill="#8c8c8c"/></svg>
<div class="a" style="left:1119.5px;top:877px;width:12px;height:2px;background:#444;"></div>
<div class="a" style="left:1142px;top:878px;width:54px;height:1px;background:#555;"></div>
<div class="a" style="left:1196px;top:878px;width:84px;height:1px;background:#b4b4b4;"></div>
<div class="a" style="left:1210px;top:875px;width:1px;height:7px;background:#c4c4c4;"></div>
<div class="a" style="left:1190px;top:872px;width:12px;height:12px;background:#f0f0f0;border:1.3px solid #555;border-radius:50%;box-sizing:border-box;"></div>
<svg class="a" style="left:1291px;top:872px;" width="13" height="13" viewBox="0 0 13 13"><path d="M6.5 0.6V12.4M0.6 6.5H12.4" stroke="#444" stroke-width="1.8" fill="none"/></svg>
<svg class="a" style="left:1317px;top:872px;" width="13" height="13" viewBox="0 0 13 13"><path d="M0.7 4V2Q0.7 0.7 2 0.7H4M9 0.7H11Q12.3 0.7 12.3 2V4M12.3 9V11Q12.3 12.3 11 12.3H9M4 12.3H2Q0.7 12.3 0.7 11V9" fill="none" stroke="#444" stroke-width="1.3"/><circle cx="6.5" cy="6.5" r="1" fill="#444"/></svg>
<div class="a" style="left:245px;top:148.5px;width:432px;height:753px;background:#fff;box-shadow:0 0 0 0.6px rgba(0,0,0,.28),0 0 5px rgba(0,0,0,.5);"></div>
<div class="a" style="left:247px;top:150px;width:428px;height:22px;background:#f5f5f6;"></div>
<span class="t" style="left:256.5px;top:151.3px;font-size:12px;line-height:18px;color:#2a2a2a;font-weight:700;">每日限免图标</span>
<span class="t" style="left:604px;top:151.3px;font-size:12px;line-height:18px;color:#4a72cc;">最近使用</span>
<svg class="a" style="left:658px;top:154.2px;" width="10" height="11" viewBox="0 0 10 11"><path d="M1 1L5 5.5L1 10M5.4 1L9.4 5.5L5.4 10" fill="none" stroke="#4a72cc" stroke-width="1"/></svg>
<div class="a" style="left:259px;top:186px;width:405px;height:36px;background:#fff;border:1px solid #e8eaef;border-radius:4px;box-sizing:border-box;"></div>
<svg class="a" style="left:268px;top:198px;" width="15" height="15" viewBox="0 0 15 15"><circle cx="5.8" cy="5.8" r="4.8" fill="none" stroke="#8e949e" stroke-width="1.6"/><path d="M9.4 9.4L13.8 13.8" stroke="#8e949e" stroke-width="1.8" stroke-linecap="round"/></svg>
<span class="t" style="left:287.5px;top:195.85px;font-size:13.3px;line-height:19.3px;color:#8b95ab;">搜索图标</span>
<div class="a" style="left:514px;top:194.5px;width:39px;height:19px;background:#f2f4f7;border-radius:3px;"></div>
<span class="t" style="left:514px;top:195.8px;font-size:12px;line-height:18px;color:#8b95ab;width:39px;text-align:center;">箭头</span>
<div class="a" style="left:565.5px;top:194.5px;width:39px;height:19px;background:#f2f4f7;border-radius:3px;"></div>
<span class="t" style="left:565.5px;top:195.8px;font-size:12px;line-height:18px;color:#8b95ab;width:39px;text-align:center;">手机</span>
<div class="a" style="left:617.5px;top:194.5px;width:39px;height:19px;background:#f2f4f7;border-radius:3px;"></div>
<span class="t" style="left:617.5px;top:195.8px;font-size:12px;line-height:18px;color:#8b95ab;width:39px;text-align:center;">办公</span>
<span class="t" style="left:618px;top:241.5px;font-size:12px;line-height:18px;color:#4a72cc;">更多</span>
<svg class="a" style="left:648px;top:245px;" width="7" height="11" viewBox="0 0 7 11"><path d="M1.2 1L5.6 5.5L1.2 10" fill="none" stroke="#4a72cc" stroke-width="1"/></svg>
<svg class="a" style="left:260px;top:241.5px;" width="18" height="18" viewBox="0 0 16 16"><circle cx="8" cy="3.6" r="3" fill="#e0805a"/><path d="M5 2.4L3.4 1.2M11 2.4L12.6 1.2" stroke="#c96a4a" stroke-width="1.2"/><path d="M4 8.6H12M3.2 11.4H12.8M8 7V15.6M4.6 15.6L8 12.4L11.4 15.6" stroke="#55606e" stroke-width="1.2" fill="none"/></svg>
<svg class="a" style="left:301px;top:241.5px;" width="18" height="18" viewBox="0 0 16 16"><path d="M8.6 3L11.6 0.8L14.6 3V11.4H8.6Z" fill="#e9713c"/><path d="M2.6 7.4L6.4 4.4L10.2 7.4V15.2H2.6Z" fill="#2fc2cf"/><rect x="5" y="10.4" width="2.8" height="3.2" fill="#255a6c"/><path d="M2.6 7.4L6.4 4.4L10.2 7.4V15.2H2.6Z" fill="none" stroke="#1d8f9e" stroke-width="0.6"/></svg>
<svg class="a" style="left:341px;top:241.5px;" width="18" height="18" viewBox="0 0 16 16"><path d="M1.6 1.2H9.4V4L8.2 7.4H3L1.6 4Z" fill="#3b8f96"/><rect x="1.2" y="0.6" width="8.6" height="2" fill="#7d6a8c"/><path d="M5.6 7.4V12.6" stroke="#4a4a55" stroke-width="1.2"/><path d="M9.6 9.6L13.2 7.2L15.4 9.6L12.6 12.4Z" fill="#a9b0b8"/><path d="M10 12.2L7.6 15.2M13.6 8.6L15.6 7" stroke="#55606e" stroke-width="1.1"/></svg>
<svg class="a" style="left:381px;top:241.5px;" width="18" height="18" viewBox="0 0 16 16"><path d="M4.6 7V4.6Q4.6 1.4 8 1.4T11.4 4.6V7" fill="none" stroke="#b8c89a" stroke-width="1.6"/><rect x="2.2" y="6.6" width="11.6" height="8.6" rx="1" fill="#6cc6e6"/><rect x="2.2" y="9.6" width="11.6" height="2.6" fill="#9adcf0"/><rect x="7.2" y="9" width="1.6" height="3.6" fill="#3d7f9c"/></svg>
<svg class="a" style="left:422px;top:241.5px;" width="18" height="18" viewBox="0 0 16 16"><path d="M8 1.4L13.8 4.6V11.4L8 14.6L2.2 11.4V4.6Z" fill="none" stroke="#9aa4ae" stroke-width="1"/><path d="M8 1.4V14.6M2.2 4.6L13.8 11.4M13.8 4.6L2.2 11.4" stroke="#b8c0c8" stroke-width="0.7"/><circle cx="8" cy="8" r="2.4" fill="#8dc63f"/><circle cx="8" cy="1.6" r="1.4" fill="#7fb24a"/><circle cx="13.8" cy="4.8" r="1.4" fill="#7fb24a"/><circle cx="13.8" cy="11.2" r="1.4" fill="#7fb24a"/><circle cx="8" cy="14.4" r="1.4" fill="#7fb24a"/><circle cx="2.2" cy="11.2" r="1.4" fill="#7fb24a"/><circle cx="2.2" cy="4.8" r="1.4" fill="#7fb24a"/></svg>
<svg class="a" style="left:462px;top:241.5px;" width="18" height="18" viewBox="0 0 16 16"><rect x="2.6" y="2.4" width="10.8" height="7.6" fill="#5fc0b6" stroke="#3b7fa8" stroke-width="1"/><path d="M5 6.4L7 8L10.6 4.4" stroke="#e8f6d8" stroke-width="1.2" fill="none"/><rect x="0.8" y="10.6" width="14.4" height="1.6" fill="#3f7fb8"/><path d="M8 12.2V14.6M5.6 14.8H10.4" stroke="#6a9ac8" stroke-width="1"/></svg>
<svg class="a" style="left:502px;top:241.5px;" width="18" height="18" viewBox="0 0 16 16"><circle cx="4.4" cy="2.8" r="1.7" fill="#e8734a"/><circle cx="8" cy="2" r="1.7" fill="#f0a24a"/><circle cx="11.6" cy="2.8" r="1.7" fill="#e8734a"/><path d="M1.4 5.6Q1.4 4.4 2.8 4.4H13.2Q14.6 4.4 14.6 5.6V14.8H1.4Z" fill="#27a6d6"/><path d="M6 14.8V9.6Q6 8.6 7 8.6H9Q10 8.6 10 9.6V14.8Z" fill="#f2c9a6"/><path d="M5.4 4.6V14.8M10.6 4.6V14.8" stroke="#1a7ca6" stroke-width="0.8"/></svg>
<svg class="a" style="left:541px;top:241.5px;" width="18" height="18" viewBox="0 0 16 16"><path d="M6 14.6V4Q6 1.2 8.6 1.2T11.2 4V14.6Z" fill="#f4f4f4" stroke="#6a6a6a" stroke-width="0.9"/><path d="M8.6 1.2V14.6" stroke="#9a9a9a" stroke-width="0.7"/><circle cx="4.4" cy="11.6" r="3.4" fill="#f09a3a" stroke="#a8621e" stroke-width="0.7"/><path d="M3.2 11.6L4.2 12.6L5.8 10.6" stroke="#7a4412" stroke-width="0.8" fill="none"/><path d="M12.8 8.2V11L15.2 14.8H10.4L12.4 11" fill="#5bc0c6" stroke="#2f7f8a" stroke-width="0.7"/></svg>
<svg class="a" style="left:580px;top:241.5px;" width="18" height="18" viewBox="0 0 16 16"><path d="M6.4 1.6L11.6 4.2L6.4 6.8L1.2 4.2Z" fill="#e8534a"/><path d="M1.2 4.2L6.4 6.8V13.6L1.2 11Z" fill="#f2a13a"/><path d="M6.4 6.8L11.6 4.2V11L6.4 13.6Z" fill="#3aa6c8"/><circle cx="12.2" cy="11.6" r="3.2" fill="#e6e2d6" stroke="#a8a290" stroke-width="0.8"/><path d="M10.8 11.8Q12.2 13 13.6 11.8" stroke="#8a8474" stroke-width="0.7" fill="none"/></svg>
<div class="a" style="left:247px;top:279.5px;width:428px;height:21px;background:#f5f5f6;"></div>
<span class="t" style="left:256.5px;top:280.5px;font-size:12px;line-height:18px;color:#2a2a2a;font-weight:700;">预设</span>
<span class="t" style="left:255.5px;top:304.3px;font-size:12px;line-height:18px;color:#444;">线条</span>
<div class="a" style="left:287.5px;top:311px;width:376.0px;height:1px;background:#d6d7dc;"></div>
<span class="t" style="left:255.5px;top:357.0px;font-size:12px;line-height:18px;color:#444;">矩形</span>
<div class="a" style="left:287.5px;top:364px;width:376.0px;height:1px;background:#d6d7dc;"></div>
<span class="t" style="left:255.5px;top:410.0px;font-size:12px;line-height:18px;color:#444;">基本形状</span>
<div class="a" style="left:311.5px;top:417px;width:352.0px;height:1px;background:#d6d7dc;"></div>
<span class="t" style="left:255.5px;top:511.0px;font-size:12px;line-height:18px;color:#444;">箭头总汇</span>
<div class="a" style="left:311.5px;top:518px;width:352.0px;height:1px;background:#d6d7dc;"></div>
<span class="t" style="left:255.5px;top:588.0px;font-size:12px;line-height:18px;color:#444;">公式形状</span>
<div class="a" style="left:311.5px;top:595px;width:352.0px;height:1px;background:#d6d7dc;"></div>
<span class="t" style="left:255.5px;top:641.0px;font-size:12px;line-height:18px;color:#444;">流程图</span>
<div class="a" style="left:299.5px;top:648px;width:364.0px;height:1px;background:#d6d7dc;"></div>
<span class="t" style="left:255.5px;top:718.0px;font-size:12px;line-height:18px;color:#444;">星与旗帜</span>
<div class="a" style="left:311.5px;top:725px;width:352.0px;height:1px;background:#d6d7dc;"></div>
<span class="t" style="left:255.5px;top:795.3px;font-size:12px;line-height:18px;color:#444;">标注</span>
<div class="a" style="left:287.5px;top:802px;width:376.0px;height:1px;background:#d6d7dc;"></div>
<span class="t" style="left:255.5px;top:848.3px;font-size:12px;line-height:18px;color:#444;">动作按钮</span>
<div class="a" style="left:311.5px;top:855px;width:352.0px;height:1px;background:#d6d7dc;"></div>
<div class="a" style="left:247px;top:898px;width:416.5px;height:1px;background:#cfd2d8;"></div>
<svg class="a" style="left:0;top:0" width="1355" height="905" viewBox="0 0 1355 905"><g fill="none" stroke="#8491b9" stroke-width="1.15" stroke-linejoin="miter"><g transform="translate(253 329)"><path d="M1 1.5L14.5 14.5"/></g><g transform="translate(277 329)"><path d="M1 1.5L14.5 14.5M14.5 10.5V14.5H10.5"/></g><g transform="translate(301 329)"><path d="M1.5 5.5V1.5H5.5M1.5 1.5L14.5 14.5M14.5 10.5V14.5H10.5"/></g><g transform="translate(325 329)"><path d="M1 1.5H8V14.5H15.5"/></g><g transform="translate(349 329)"><path d="M1 1.5H7.5V13H15M12.5 10.5L15 13L12.5 15.5"/></g><g transform="translate(373 329)"><path d="M3.5 0.5L1 3L3.5 5.5M1 3H7.5V13H15M12.5 10.5L15 13L12.5 15.5"/></g><g transform="translate(397 329)"><path d="M1 1.5H6C10.5 1.5 10 5 7.5 7.5C5 10 4.5 14.5 9 14.5H15.5"/></g><g transform="translate(421 329)"><path d="M1 1.5H6C10.5 1.5 10 5 7.5 7C5 9.5 5 13 9 13H15M12.5 10.5L15 13L12.5 15.5"/></g><g transform="translate(445 329)"><path d="M3.5 0.5L1 3L3.5 5.5M1 3H6C10 3 9.5 5.5 7.5 7.5C5.5 9.5 5.5 13 9 13H15M12.5 10.5L15 13L12.5 15.5"/></g><g transform="translate(469 329)"><path d="M12.5 3.5C10 -0.5 3 0.5 4.5 5.5C6 9.5 12.5 9 11.5 13C10.5 16 4.5 15.5 2.5 12"/></g><g transform="translate(493 329)"><path d="M1.5 14.5V6L5.5 8.5Q9.5 8 9 5L6 3L10 1L15.5 6.5V14.5Z"/></g><g transform="translate(517 329)"><path d="M1 15C4 10 14 5 11 2C8 -0.5 3 5 4 9C5 13 13 15 15.5 11C17 8 8 8 2.5 12.5"/></g><g transform="translate(253 382)"><rect x="0.5" y="1.5" width="15" height="13"/></g><g transform="translate(277 382)"><rect x="0.5" y="1.5" width="15" height="13" rx="3.5"/></g><g transform="translate(301 382)"><path d="M0.5 1.5H10L15.5 7V14.5H0.5Z"/></g><g transform="translate(325 382)"><path d="M5.5 1.5H10.5L15.5 6.5V14.5H0.5V6.5Z"/></g><g transform="translate(349 382)"><path d="M0.5 1.5H10L15.5 7V15H6L0.5 9.5Z"/></g><g transform="translate(373 382)"><path d="M4 1.5H10.5L15.5 6.5V14.5H0.5V5Q0.5 1.5 4 1.5Z"/></g><g transform="translate(397 382)"><path d="M0.5 1.5H12.5Q15.5 1.5 15.5 4.5V14.5H0.5Z"/></g><g transform="translate(421 382)"><path d="M3.5 1.5H12.5Q15.5 1.5 15.5 4.5V14.5H0.5V4.5Q0.5 1.5 3.5 1.5Z"/></g><g transform="translate(445 382)"><path d="M3.5 1.5H15.5V11.5Q15.5 14.5 12.5 14.5H0.5V4.5Q0.5 1.5 3.5 1.5Z"/></g><g transform="translate(253 435)"><rect x="0.5" y="1.5" width="15" height="13"/><path d="M3.2 9.2L5.4 4.2L7.6 9.2M4 7.6H6.8M9.6 5H12.8M9.6 7.6H12.8M3.2 11.6H12.8"/></g><g transform="translate(277 435)"><rect x="0.5" y="1.5" width="15" height="13"/><path d="M3.6 4V10.4M6 4V10.4M8 10.4L10.4 4L12.8 10.4M8.8 8.4H12M8.4 12.4H9.4M11.4 12.4H12.4"/></g><g transform="translate(301 435)"><circle cx="8" cy="8" r="7.5"/></g><g transform="translate(325 435)"><path d="M8 1.5L15.5 14.5H0.5Z"/></g><g transform="translate(349 435)"><path d="M1.5 1L15.5 14.5H1.5Z"/></g><g transform="translate(373 435)"><path d="M4.5 2.5H15.5L11.5 13.5H0.5Z"/></g><g transform="translate(397 435)"><path d="M3.5 2.5H12.5L15.5 13.5H0.5Z"/></g><g transform="translate(421 435)"><path d="M8 1L15 8L8 15L1 8Z"/></g><g transform="translate(445 435)"><path d="M8 1L15.5 6.5L12.5 14.5H3.5L0.5 6.5Z"/></g><g transform="translate(469 435)"><path d="M4 1.5H12L15.5 8L12 14.5H4L0.5 8Z"/></g><g transform="translate(493 435)"><path d="M4 1.5H12L15.5 8L12 14.5H4L0.5 8Z"/><text x="8" y="10.7" font-size="7.4" text-anchor="middle" fill="#5d71aa" stroke="none" font-family="Liberation Sans,sans-serif">7</text></g><g transform="translate(517 435)"><path d="M4 1.5H12L15.5 8L12 14.5H4L0.5 8Z"/><text x="8" y="10.7" font-size="7.4" text-anchor="middle" fill="#5d71aa" stroke="none" font-family="Liberation Sans,sans-serif">8</text></g><g transform="translate(541 435)"><path d="M4 1.5H12L15.5 8L12 14.5H4L0.5 8Z"/><text x="8" y="10.7" font-size="7.4" text-anchor="middle" fill="#5d71aa" stroke="none" font-family="Liberation Sans,sans-serif">10</text></g><g transform="translate(565 435)"><path d="M4 1.5H12L15.5 8L12 14.5H4L0.5 8Z"/><text x="8" y="10.7" font-size="7.4" text-anchor="middle" fill="#5d71aa" stroke="none" font-family="Liberation Sans,sans-serif">12</text></g><g transform="translate(589 435)"><path d="M8 8V0.5A7.5 7.5 0 1 0 15.5 8Z"/></g><g transform="translate(613 435)"><path d="M9.5 0.7A7.4 7.4 0 1 0 13.4 13Z"/></g><g transform="translate(637 435)"><path d="M8 1.5H14.5V8A6.5 6.5 0 1 1 8 1.5Z"/></g><g transform="translate(253 459)"><rect x="0.5" y="1.5" width="15" height="13"/><rect x="3.5" y="4.5" width="9" height="7"/></g><g transform="translate(277 459)"><path d="M1.5 1.5H14.5L11.5 4.5H4.5V11L1.5 14.5Z"/></g><g transform="translate(301 459)"><path d="M1.5 1.5H5.5V10.5H14.5V14.5H1.5Z"/></g><g transform="translate(325 459)"><path d="M1.5 8L8 1.5H14.5L1.5 14.5Z"/></g><g transform="translate(349 459)"><path d="M5 1.5H11V5H15.5V11H11V14.5H5V11H0.5V5H5Z"/></g><g transform="translate(373 459)"><path d="M3.5 1.5H12.5V3.5H15.5V12.5H12.5V14.5H3.5V12.5H0.5V3.5H3.5Z"/></g><g transform="translate(397 459)"><path d="M2.5 3.5V12.5A5.5 2 0 0 0 13.5 12.5V3.5"/><ellipse cx="8" cy="3.5" rx="5.5" ry="2"/></g><g transform="translate(421 459)"><path d="M0.5 4.5H11.5V14.5H0.5ZM0.5 4.5L4 1H15L11.5 4.5M15 1V11L11.5 14.5"/></g><g transform="translate(445 459)"><rect x="0.5" y="1.5" width="15" height="13"/><rect x="3.5" y="4.5" width="9" height="7"/><path d="M0.5 1.5L3.5 4.5M15.5 1.5L12.5 4.5M0.5 14.5L3.5 11.5M15.5 14.5L12.5 11.5"/></g><g transform="translate(469 459)"><circle cx="8" cy="8" r="7.5"/><circle cx="8" cy="8" r="3.5"/></g><g transform="translate(493 459)"><circle cx="8" cy="8" r="7.5"/><circle cx="8" cy="8" r="5"/><path d="M4.2 5.4L10.6 11.8M5.4 4.2L11.8 10.6"/></g><g transform="translate(517 459)"><path d="M0.5 11.5A7.5 7.5 0 0 1 15.5 11.5H11A3 3 0 0 0 5 11.5Z"/></g><g transform="translate(541 459)"><path d="M1.5 1.5H14.5V10.5L10.5 14.5H1.5ZM14.5 10.5L11.5 11.5L10.5 14.5"/></g><g transform="translate(565 459)"><circle cx="8" cy="8" r="7.5"/><path d="M4.6 9.8Q8 13.4 11.4 9.8"/><circle cx="5.4" cy="6" r="0.5"/><circle cx="10.6" cy="6" r="0.5"/></g><g transform="translate(589 459)"><path d="M8 14.5L1.6 8.2C-1 4.8 3.6 0.8 8 4.8C12.4 0.8 17 4.8 14.4 8.2Z"/></g><g transform="translate(613 459)"><path d="M1 1.5L7 0.5L10 5L8.5 5.5L13 9L11.5 9.5L15.5 15L6.5 10.5L8 10L3.5 6.5L5 6Z"/></g><g transform="translate(637 459)"><circle cx="8" cy="8" r="4.2"/><path d="M8 0.2V2M8 14V15.8M0.2 8H2M14 8H15.8M2.4 2.4L3.8 3.8M12.2 12.2L13.6 13.6M2.4 13.6L3.8 12.2M12.2 3.8L13.6 2.4" stroke-width="1.5"/></g><g transform="translate(253 483)"><path d="M11.5 1A7.3 7.3 0 1 0 12.5 14.6A7.6 7.6 0 0 1 11.5 1Z"/></g><g transform="translate(277 483)"><path d="M4.4 12.6A3 3 0 0 1 2.2 7.2A3.2 3.2 0 0 1 5.4 3A3.4 3.4 0 0 1 11 3A3.2 3.2 0 0 1 14 7.2A3 3 0 0 1 11.8 12.6A3.6 3.6 0 0 1 4.4 12.6Z"/></g><g transform="translate(301 483)"><path d="M1 1.5Q13 2 14.5 15"/></g><g transform="translate(325 483)"><path d="M5.5 1.5H4.5Q2.5 1.5 2.5 3.5V12.5Q2.5 14.5 4.5 14.5H5.5M10.5 1.5H11.5Q13.5 1.5 13.5 3.5V12.5Q13.5 14.5 11.5 14.5H10.5"/></g><g transform="translate(349 483)"><path d="M6 1.5Q3.5 1.5 3.5 3.5V6Q3.5 8 1.5 8Q3.5 8 3.5 10V12.5Q3.5 14.5 6 14.5M10 1.5Q12.5 1.5 12.5 3.5V6Q12.5 8 14.5 8Q12.5 8 12.5 10V12.5Q12.5 14.5 10 14.5"/></g><g transform="translate(373 483)"><path d="M9.5 1.5H7.5Q5.5 1.5 5.5 3.5V12.5Q5.5 14.5 7.5 14.5H9.5"/></g><g transform="translate(397 483)"><path d="M7 1.5H9Q11 1.5 11 3.5V12.5Q11 14.5 9 14.5H7"/></g><g transform="translate(421 483)"><path d="M10 1.5Q8 1.5 8 3.5V6Q8 8 6 8Q8 8 8 10V12.5Q8 14.5 10 14.5"/></g><g transform="translate(445 483)"><path d="M6.5 1.5Q8.5 1.5 8.5 3.5V6Q8.5 8 10.5 8Q8.5 8 8.5 10V12.5Q8.5 14.5 6.5 14.5"/></g><g transform="translate(253 536)"><path d="M1 5.5H9V2.5L15 8L9 13.5V10.5H1Z"/></g><g transform="translate(277 536)"><path d="M1 5.5H9V2.5L15 8L9 13.5V10.5H1Z" transform="matrix(-1 0 0 1 16 0)"/></g><g transform="translate(301 536)"><path d="M8 0.5L14 7H10.5V15H5.5V7H2Z"/></g><g transform="translate(325 536)"><path d="M8 15.5L14 9H10.5V1H5.5V9H2Z"/></g><g transform="translate(349 536)"><path d="M0.5 8L5 3.5V6H11V3.5L15.5 8L11 12.5V10H5V12.5Z"/></g><g transform="translate(373 536)"><path d="M8 0.5L12 5H9.8V11H12L8 15.5L4 11H6.2V5H4Z"/></g><g transform="translate(397 536)"><path d="M8 0.5L11 3.5H9.5V6.5H12.5V5L15.5 8L12.5 11V9.5H9.5V12.5H11L8 15.5L5 12.5H6.5V9.5H3.5V11L0.5 8L3.5 5V6.5H6.5V3.5H5Z"/></g><g transform="translate(421 536)"><path d="M8 1L11 4.5H9.5V10H12.5V8.5L15.5 11.5L12.5 14.5V13H3.5V14.5L0.5 11.5L3.5 8.5V10H6.5V4.5H5Z"/></g><g transform="translate(445 536)"><path d="M1.5 14.5V9Q1.5 3.5 7 3.5H10V1L15.5 5.5L10 10V7.5H7.5Q5.5 7.5 5.5 9.5V14.5Z"/></g><g transform="translate(469 536)"><path d="M1.5 14.5V6.5Q1.5 1.5 6.5 1.5H8Q13 1.5 13 6.5V9H15.5L11 14.5L6.5 9H9V7Q9 5.5 7.5 5.5H7Q5.5 5.5 5.5 7V14.5Z"/></g><g transform="translate(493 536)"><path d="M0.5 11L4.5 7V9.5H9.5V5H7L11 0.5L15 5H12.5V12.5H4.5V15Z"/></g><g transform="translate(517 536)"><path d="M2.5 10.5H9.5V5H7L11 0.5L15 5H12.5V14.5H2.5Z"/></g><g transform="translate(541 536)"><path d="M10.5 1.5H5.5Q1.5 1.5 1.5 6V7Q1.5 11.5 6 11.5H10V14.5L15 10L10 5.5V8.5H7Q4.5 8.5 4.5 6.5Q4.5 4.5 7 4.5H10.5Z"/></g><g transform="translate(565 536)"><path d="M5.5 1.5H10.5Q14.5 1.5 14.5 6V7Q14.5 11.5 10 11.5H6V14.5L1 10L6 5.5V8.5H9Q11.5 8.5 11.5 6.5Q11.5 4.5 9 4.5H5.5Z"/></g><g transform="translate(589 536)"><path d="M1.5 4.5V9Q1.5 14 6 14H7Q11.5 14 11.5 9.5V6.5H14.5L10 1.5L5.5 6.5H8.5V9Q8.5 11 6.5 11Q4.5 11 4.5 9V4.5Z"/></g><g transform="translate(613 536)"><path d="M1.5 11.5V7Q1.5 2 6 2H7Q11.5 2 11.5 6.5V9.5H14.5L10 14.5L5.5 9.5H8.5V7Q8.5 5 6.5 5Q4.5 5 4.5 7V11.5Z"/></g><g transform="translate(637 536)"><path d="M4.5 5.5H9.5V2.5L15 8L9.5 13.5V10.5H4.5ZM1.5 5.5V10.5"/></g><g transform="translate(253 560)"><path d="M0.5 5.5H9V2L15.5 8L9 14V10.5H0.5L3 8Z"/></g><g transform="translate(277 560)"><path d="M0.5 2.5H11L15.5 8L11 13.5H0.5Z"/></g><g transform="translate(301 560)"><path d="M0.5 2.5H11L15.5 8L11 13.5H0.5L5 8Z"/></g><g transform="translate(325 560)"><path d="M0.5 1.5H8.5V5.5H11V3L15.5 8L11 13V10.5H8.5V14.5H0.5Z"/></g><g transform="translate(349 560)"><path d="M15.5 1.5H7.5V5.5H5V3L0.5 8L5 13V10.5H7.5V14.5H15.5Z"/></g><g transform="translate(373 560)"><path d="M1.5 15.5V8.5H5.5V6H3L8 0.5L13 6H10.5V8.5H14.5V15.5Z"/></g><g transform="translate(397 560)"><path d="M1.5 0.5V7.5H5.5V10H3L8 15.5L13 10H10.5V7.5H14.5V0.5Z"/></g><g transform="translate(421 560)"><path d="M5.5 2.5H10.5V6H12V4.5L15.5 8L12 11.5V10H10.5V13.5H5.5V10H4V11.5L0.5 8L4 4.5V6H5.5Z"/></g><g transform="translate(445 560)"><path d="M8 0.5L10.5 3H9.5V4.5H11.5V6.5H13V5.5L15.5 8L13 10.5V9.5H11.5V11.5H9.5V13H10.5L8 15.5L5.5 13H6.5V11.5H4.5V9.5H3V10.5L0.5 8L3 5.5V6.5H4.5V4.5H6.5V3H5.5Z" stroke="#7aa0e0"/></g><g transform="translate(469 560)"><path d="M1 11A6.2 6.2 0 0 1 13.2 9.5H15.5L11.6 14.5L7.6 9.5H9.6A2.8 2.8 0 0 0 4.6 11Z"/></g><g transform="translate(253 613)"><path d="M6.5 0.5H9.5V6.5H15.5V9.5H9.5V15.5H6.5V9.5H0.5V6.5H6.5Z"/></g><g transform="translate(277 613)"><rect x="0.5" y="6.5" width="15" height="3"/></g><g transform="translate(301 613)"><path d="M6.5 0.5H9.5V6.5H15.5V9.5H9.5V15.5H6.5V9.5H0.5V6.5H6.5Z" transform="rotate(45 8 8)"/></g><g transform="translate(325 613)"><rect x="0.5" y="6.5" width="15" height="3"/><circle cx="8" cy="2.6" r="1.6"/><circle cx="8" cy="13.4" r="1.6"/></g><g transform="translate(349 613)"><rect x="0.5" y="3.5" width="15" height="3"/><rect x="0.5" y="9.5" width="15" height="3"/></g><g transform="translate(373 613)"><path d="M0.5 3.5H8.6L9.8 0.8L12 1.8L11.4 3.5H15.5V6.5H10.2L9 9.5H15.5V12.5H7.8L6.6 15.2L4.4 14.2L5 12.5H0.5V9.5H6.2L7.4 6.5H0.5Z"/></g><g transform="translate(253 666)"><rect x="0.5" y="2.5" width="15" height="11"/></g><g transform="translate(277 666)"><rect x="0.5" y="2.5" width="15" height="11" rx="3.5"/></g><g transform="translate(301 666)"><path d="M8 2.5L15.5 8L8 13.5L0.5 8Z"/></g><g transform="translate(325 666)"><path d="M3.5 2.5H15.5L12.5 13.5H0.5Z"/></g><g transform="translate(349 666)"><rect x="0.5" y="2.5" width="15" height="11"/><path d="M3.5 2.5V13.5M12.5 2.5V13.5"/></g><g transform="translate(373 666)"><rect x="1.5" y="1.5" width="13" height="13"/><path d="M5.5 1.5V14.5M1.5 5.5H14.5"/></g><g transform="translate(397 666)"><path d="M0.5 2.5H15.5V11.5Q12 10.5 8.5 12.5T0.5 13.5Z"/></g><g transform="translate(421 666)"><path d="M0.5 5.5H11.5V12.5Q9 12 6.5 13.5T0.5 14.5ZM2.5 5.5V3.5H13.5V10.5H11.5M4.5 3.5V1.5H15.5V8.5H13.5"/></g><g transform="translate(445 666)"><rect x="0.5" y="4.5" width="15" height="7" rx="3.5"/></g><g transform="translate(469 666)"><path d="M3.5 4.5H12.5L15.5 8L12.5 11.5H3.5L0.5 8Z"/></g><g transform="translate(493 666)"><path d="M0.5 6L14.5 1.5V13.5H0.5Z"/></g><g transform="translate(517 666)"><path d="M0.5 2.5H15.5L12.5 13.5H3.5Z"/></g><g transform="translate(541 666)"><circle cx="8" cy="8" r="6.8"/></g><g transform="translate(565 666)"><path d="M2 1.5H14V10.5L8 15L2 10.5Z"/></g><g transform="translate(589 666)"><path d="M4.5 1.5H14.5V14.5H1.5V5Z"/></g><g transform="translate(613 666)"><path d="M0.5 3Q4 5 8 3T15.5 3V13Q12 11 8 13T0.5 13Z"/></g><g transform="translate(637 666)"><circle cx="8" cy="8" r="7.3"/><path d="M2.8 2.8L13.2 13.2M13.2 2.8L2.8 13.2"/></g><g transform="translate(253 690)"><circle cx="7.5" cy="7.5" r="7"/><path d="M7.5 0.5V14.5M0.5 7.5H14.5"/></g><g transform="translate(277 690)"><path d="M3 1.5H13L3 14.5H13Z"/></g><g transform="translate(301 690)"><path d="M8 0.5L13.5 7.5L8 14.5L2.5 7.5ZM2.5 7.5H13.5"/></g><g transform="translate(325 690)"><path d="M8 1.5L14.5 14.5H1.5Z"/></g><g transform="translate(349 690)"><path d="M1.5 1.5H14.5L8 14.5Z"/></g><g transform="translate(373 690)"><path d="M3 2.5H15.5Q13.5 8 15.5 13.5H3Q-0.5 8 3 2.5Z"/></g><g transform="translate(397 690)"><path d="M0.5 2.5H9.5Q15.5 2.5 15.5 8T9.5 13.5H0.5Z"/></g><g transform="translate(421 690)"><path d="M8 14.5A6.8 6.8 0 1 1 13.5 11.5H15.5V14.5Z"/></g><g transform="translate(445 690)"><path d="M2.5 3.5V12.5A5.5 2 0 0 0 13.5 12.5V3.5"/><ellipse cx="8" cy="3.5" rx="5.5" ry="2"/></g><g transform="translate(469 690)"><path d="M3.5 2.5H13.5A2 5.5 0 0 1 13.5 13.5H3.5A2 5.5 0 0 1 3.5 2.5ZM13.5 2.5A2 5.5 0 0 0 13.5 13.5"/></g><g transform="translate(493 690)"><path d="M4.5 2.5H12Q15.5 2.5 15.5 6V10Q15.5 13.5 12 13.5H4.5L0.5 8Z"/></g><g transform="translate(253 743)"><path d="M8 3.5L9.8 0.5L10.4 4.2L15 2.2L12.2 6L15.5 7L12.4 9L15.4 14L10.6 11.4L9.6 15.5L7.4 11.6L4.4 14.6L4.6 10.6L0.5 10.4L3.6 8L0.5 4.6L5 5.2L4.2 1Z" stroke="#6c8fd6"/></g><g transform="translate(277 743)"><path d="M8.6 3.4L11.6 0.6L11.6 4.6L15.5 4L12.8 7.2L15.2 9.4L12.2 10L14 15L9.6 11.6L7.4 15.4L6.4 11.4L2 13.2L4 9.6L0.5 7.4L4.4 6.4L3 2.2L6.8 4.6Z"/></g><g transform="translate(301 743)"><path d="M8 0.5L9.8 6.2L15.5 8L9.8 9.8L8 15.5L6.2 9.8L0.5 8L6.2 6.2Z"/></g><g transform="translate(325 743)"><path d="M8.0 0.6L10.0 5.8L15.6 6.1L11.2 9.7L12.7 15.1L8.0 12.0L3.3 15.1L4.8 9.7L0.4 6.1L6.0 5.8Z"/></g><g transform="translate(349 743)"><path d="M8.0 0.4L10.1 4.4L14.6 4.2L12.2 8.0L14.6 11.8L10.1 11.6L8.0 15.6L5.9 11.6L1.4 11.8L3.8 8.0L1.4 4.2L5.9 4.4Z"/></g><g transform="translate(373 743)"><path d="M8.0 0.4L10.2 3.7L14.1 3.3L12.9 7.1L15.6 9.9L11.9 11.3L11.4 15.2L8.0 13.2L4.6 15.2L4.1 11.3L0.4 9.9L3.1 7.1L1.9 3.3L5.8 3.7Z"/></g><g transform="translate(397 743)"><path d="M8.0 0.2L10.4 2.3L13.5 2.5L13.7 5.6L15.8 8.0L13.7 10.4L13.5 13.5L10.4 13.7L8.0 15.8L5.6 13.7L2.5 13.5L2.3 10.4L0.2 8.0L2.3 5.6L2.5 2.5L5.6 2.3Z"/><text x="8" y="10.7" font-size="7.4" text-anchor="middle" fill="#5d71aa" stroke="none" font-family="Liberation Sans,sans-serif">8</text></g><g transform="translate(421 743)"><path d="M8.0 0.2L10.0 1.9L12.6 1.7L13.2 4.2L15.4 5.6L14.4 8.0L15.4 10.4L13.2 11.8L12.6 14.3L10.0 14.1L8.0 15.8L6.0 14.1L3.4 14.3L2.8 11.8L0.6 10.4L1.6 8.0L0.6 5.6L2.8 4.2L3.4 1.7L6.0 1.9Z"/><text x="8" y="10.7" font-size="7.4" text-anchor="middle" fill="#5d71aa" stroke="none" font-family="Liberation Sans,sans-serif">10</text></g><g transform="translate(445 743)"><path d="M8.0 0.2L9.7 1.7L11.9 1.2L12.6 3.4L14.8 4.1L14.3 6.3L15.8 8.0L14.3 9.7L14.8 11.9L12.6 12.6L11.9 14.8L9.7 14.3L8.0 15.8L6.3 14.3L4.1 14.8L3.4 12.6L1.2 11.9L1.7 9.7L0.2 8.0L1.7 6.3L1.2 4.1L3.4 3.4L4.1 1.2L6.3 1.7Z"/><text x="8" y="10.7" font-size="7.4" text-anchor="middle" fill="#5d71aa" stroke="none" font-family="Liberation Sans,sans-serif">12</text></g><g transform="translate(469 743)"><path d="M8.0 0.2L10.4 2.3L13.5 2.5L13.7 5.6L15.8 8.0L13.7 10.4L13.5 13.5L10.4 13.7L8.0 15.8L5.6 13.7L2.5 13.5L2.3 10.4L0.2 8.0L2.3 5.6L2.5 2.5L5.6 2.3Z"/><text x="8" y="10.7" font-size="7.4" text-anchor="middle" fill="#5d71aa" stroke="none" font-family="Liberation Sans,sans-serif">16</text></g><g transform="translate(493 743)"><path d="M8.0 0.2L10.4 2.3L13.5 2.5L13.7 5.6L15.8 8.0L13.7 10.4L13.5 13.5L10.4 13.7L8.0 15.8L5.6 13.7L2.5 13.5L2.3 10.4L0.2 8.0L2.3 5.6L2.5 2.5L5.6 2.3Z"/><text x="8" y="10.7" font-size="7.4" text-anchor="middle" fill="#5d71aa" stroke="none" font-family="Liberation Sans,sans-serif">24</text></g><g transform="translate(517 743)"><path d="M8.0 0.2L10.4 2.3L13.5 2.5L13.7 5.6L15.8 8.0L13.7 10.4L13.5 13.5L10.4 13.7L8.0 15.8L5.6 13.7L2.5 13.5L2.3 10.4L0.2 8.0L2.3 5.6L2.5 2.5L5.6 2.3Z"/><text x="8" y="10.7" font-size="7.4" text-anchor="middle" fill="#5d71aa" stroke="none" font-family="Liberation Sans,sans-serif">32</text></g><g transform="translate(541 743)"><path d="M3.5 3.5H12.5V10.5H3.5ZM3.5 6H0.5L2 9L0.5 12.5H5.5V10.5M12.5 6H15.5L14 9L15.5 12.5H10.5V10.5M3.5 10.5L5.5 12.5M12.5 10.5L10.5 12.5"/></g><g transform="translate(565 743)"><path d="M3.5 5.5H12.5V12.5H3.5ZM3.5 10H0.5L2 7L0.5 3.5H5.5V5.5M12.5 10H15.5L14 7L15.5 3.5H10.5V5.5M3.5 5.5L5.5 3.5M12.5 5.5L10.5 3.5"/></g><g transform="translate(589 743)"><path d="M4 12.5V7Q4 2 8 2T12 7V12.5L10 10.5V7.5Q10 5 8 5T6 7.5V10.5ZM4 8L1 7.5L2.5 10.5L1 14.5L4 12.5M12 8L15 7.5L13.5 10.5L15 14.5L12 12.5"/></g><g transform="translate(613 743)"><path d="M4 3.5V9Q4 14 8 14T12 9V3.5L10 5.5V8.5Q10 11 8 11T6 8.5V5.5ZM4 8L1 8.5L2.5 5.5L1 1.5L4 3.5M12 8L15 8.5L13.5 5.5L15 1.5L12 3.5"/></g><g transform="translate(637 743)"><path d="M4.5 1.5H14Q15.5 1.5 15.5 3T14 4.5H13.5V14.5H2Q0.5 14.5 0.5 13T2 11.5H3V3Q3 1.5 4.5 1.5ZM13.5 4.5H12.5Q12.5 3 14 3M3 11.5Q4.5 11.5 4.5 13T3 14.5"/></g><g transform="translate(253 767)"><path d="M3.5 3.5H12.5V2Q12.5 0.5 14 0.5T15.5 2V12.5H4.5V14Q4.5 15.5 3 15.5T1.5 14V5Q1.5 3.5 3.5 3.5ZM3.5 3.5V14M12.5 3.5H14Q15.5 3.5 15.5 2" stroke="#6c8fd6"/></g><g transform="translate(277 767)"><path d="M0.5 3.5Q4 1.5 8 3.5T15.5 3.5V12.5Q12 14.5 8 12.5T0.5 12.5Z"/></g><g transform="translate(301 767)"><path d="M0.5 3Q2.5 1.5 4.5 3T8 3T11.5 3T15.5 3V13Q13.5 14.5 11.5 13T8 13T4.5 13T0.5 13Z"/></g><g transform="translate(253 820)"><path d="M0.5 1.5H15.5V11.5H7L4.5 15L5 11.5H0.5Z"/></g><g transform="translate(277 820)"><path d="M3 1.5H13Q15.5 1.5 15.5 4V9Q15.5 11.5 13 11.5H7.5L4.5 15L5 11.5H3Q0.5 11.5 0.5 9V4Q0.5 1.5 3 1.5Z"/></g><g transform="translate(301 820)"><path d="M6.2 12.8A7.5 5.8 0 1 1 8.6 13L5 15.5Z"/></g><g transform="translate(325 820)"><path d="M5.4 12.6A3 3 0 0 1 2 8.6A3.2 3.2 0 0 1 4.4 3A3.6 3.6 0 0 1 10.4 2.4A3.4 3.4 0 0 1 15 6.4A3.2 3.2 0 0 1 12.6 11.8A3.8 3.8 0 0 1 7.4 12.8L5.4 15.4Z"/></g><g transform="translate(349 820)"><rect x="6.5" y="1.5" width="9" height="12"/><path d="M6.5 7.5L0.5 15"/></g><g transform="translate(373 820)"><rect x="6.5" y="1.5" width="9" height="12"/><path d="M6.5 7.5H4L0.5 15"/></g><g transform="translate(397 820)"><rect x="5.5" y="0.5" width="10" height="12"/><path d="M5.5 5.5H1V11L4.5 14.5"/></g><g transform="translate(421 820)"><rect x="9.5" y="1.5" width="6" height="12" fill="#b5c5ea" stroke="none"/><path d="M7 1.5V12M7 8L1.5 15"/></g><g transform="translate(445 820)"><rect x="9.5" y="1.5" width="6" height="12" fill="#b5c5ea" stroke="none"/><path d="M7 1.5V12M7 8H5L2 15"/></g><g transform="translate(469 820)"><rect x="9.5" y="0.5" width="6" height="11" fill="#b5c5ea" stroke="none"/><path d="M7 0.5V11.5M7 6.5H2V11.5L6 14.5"/></g><g transform="translate(493 820)"><rect x="6" y="1.5" width="9.5" height="11.5" fill="#b5c5ea" stroke="none"/><path d="M6 7.5L0.5 15"/></g><g transform="translate(517 820)"><rect x="6" y="1.5" width="9.5" height="11.5" fill="#b5c5ea" stroke="none"/><path d="M6 7.5H3.5L0.5 15"/></g><g transform="translate(541 820)"><rect x="6" y="0.5" width="9.5" height="11" fill="#b5c5ea" stroke="none"/><path d="M6 5.5H1V11L4.5 14.5"/></g><g transform="translate(565 820)"><rect x="9.5" y="1.5" width="5.5" height="12" fill="#dde5f8"/><path d="M7 1.5V12M7 8L1.5 15"/></g><g transform="translate(589 820)"><rect x="9.5" y="1.5" width="5.5" height="12" fill="#dde5f8"/><path d="M7 1.5V12M7 8H5L2 15"/></g><g transform="translate(613 820)"><rect x="9.5" y="0.5" width="5.5" height="11" fill="#dde5f8"/><path d="M7 0.5V11.5M7 6.5H2V11.5L6 14.5"/></g><g transform="translate(253 873)"><rect x="0.5" y="1.5" width="15" height="13" rx="1" stroke="#6c8fd6"/><rect x="2.5" y="3.5" width="11" height="9" stroke-width="0.8"/><path d="M9.5 5.5V10.5L5.5 8Z"/></g><g transform="translate(277 873)"><rect x="0.5" y="1.5" width="15" height="13" rx="1" stroke="#6c8fd6"/><rect x="2.5" y="3.5" width="11" height="9" stroke-width="0.8"/><path d="M6.5 5.5V10.5L10.5 8Z"/></g><g transform="translate(301 873)"><rect x="0.5" y="1.5" width="15" height="13" rx="1" stroke="#6c8fd6"/><rect x="2.5" y="3.5" width="11" height="9" stroke-width="0.8"/><path d="M10.5 5.5V10.5L6.5 8ZM5.5 5.5V10.5"/></g><g transform="translate(325 873)"><rect x="0.5" y="1.5" width="15" height="13" rx="1" stroke="#6c8fd6"/><rect x="2.5" y="3.5" width="11" height="9" stroke-width="0.8"/><path d="M5.5 5.5V10.5L9.5 8ZM10.5 5.5V10.5"/></g><g transform="translate(349 873)"><rect x="0.5" y="1.5" width="15" height="13" rx="1"/><path d="M4.5 8.5L8 5L11.5 8.5V11.5H4.5Z"/><circle cx="8" cy="9.6" r="0.6"/></g><g transform="translate(373 873)"><rect x="0.5" y="1.5" width="15" height="13" rx="1"/><path d="M8 7.5V11.5M6.5 11.5H9.5M6.5 7.5H8" stroke-width="1.4"/><circle cx="8" cy="5" r="0.9" fill="#8093c4" stroke="none"/></g><g transform="translate(397 873)"><rect x="0.5" y="1.5" width="15" height="13" rx="1"/><path d="M5 8.5V10Q5 11.5 6.5 11.5T8 10V6.5H6.5L9.5 3.5L12 6.5H10.5V9.5"/></g><g transform="translate(421 873)"><rect x="0.5" y="1.5" width="15" height="13" rx="1"/><path d="M3.5 5.5H10V10.5H3.5ZM10 7.5L12.5 5.5V10.5L10 8.5M5.5 7.5H8"/></g><g transform="translate(445 873)"><rect x="0.5" y="1.5" width="15" height="13" rx="1"/><path d="M4.5 4.5H9L11.5 7V11.5H4.5ZM9 4.5V7H11.5"/></g><g transform="translate(469 873)"><rect x="0.5" y="1.5" width="15" height="13" rx="1"/><path d="M3.5 6.5H5.5L8.5 4V12L5.5 9.5H3.5ZM10.5 5L12 4M10.5 8H12.5M10.5 11L12 12"/></g><g transform="translate(493 873)"><rect x="0.5" y="1.5" width="15" height="13" rx="1"/><text x="8" y="11.6" font-size="10" font-weight="700" text-anchor="middle" fill="#6b7fb6" stroke="none" font-family="Liberation Sans,sans-serif">?</text></g><g transform="translate(517 873)"><rect x="0.5" y="1.5" width="15" height="13" rx="1" stroke="#6c8fd6"/><rect x="2.5" y="3.5" width="11" height="9" stroke-width="0.8"/></g></g></svg>
<svg class="a" style="left:0;top:0" width="1355" height="905" viewBox="0 0 1355 905"><rect x="316.5" y="55.0" width="53" height="35.2" fill="none" stroke="#e00810" stroke-width="3"/><rect x="246.5" y="90.5" width="46" height="66.6" fill="none" stroke="#e00810" stroke-width="3"/><rect x="274.5" y="374.0" width="20" height="28.0" fill="none" stroke="#e00810" stroke-width="3"/><path d="M318.0 91.5L301.2 113.5" stroke="#e00810" stroke-width="3.2" fill="none"/><path d="M293.6 123.4L298.4 107.6L301.2 113.5L307.6 114.6Z" fill="#e00810"/><path d="M263.4 157.0L275.1 338.1" stroke="#e00810" stroke-width="3.2" fill="none"/><path d="M276.2 354.6L269.2 338.5L275.1 338.1L281.0 337.8Z" fill="#e00810"/></svg>
</body></html>
